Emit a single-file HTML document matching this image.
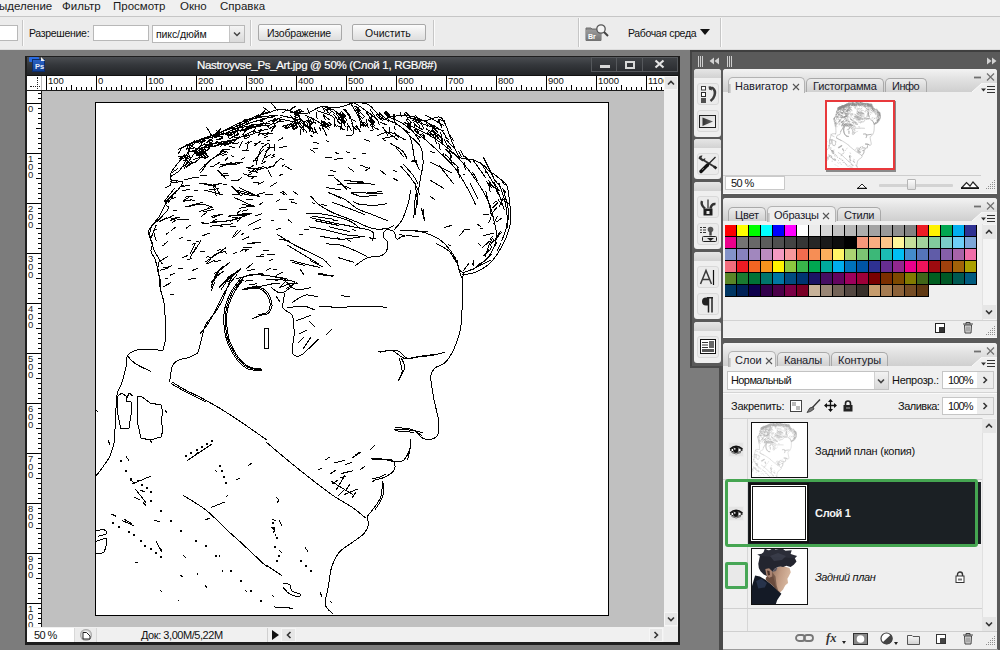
<!DOCTYPE html>
<html><head><meta charset="utf-8">
<style>
*{box-sizing:border-box;margin:0;padding:0}
html,body{width:1000px;height:650px;overflow:hidden;background:#7c7c7c;font-family:"Liberation Sans",sans-serif;font-size:11px;color:#111}
div{position:absolute}
.t{position:absolute;white-space:nowrap;line-height:1}
.sep{width:2px;border-left:1px solid #c6c6c6;border-right:1px solid #fbfbfb}
.inp{background:#fff;border:1px solid #b8b8b8}
.btn{background:linear-gradient(#fcfcfc,#eeeeee 45%,#dedede);border:1px solid #a8a8a8;border-radius:2px}
.grp{width:27px;background:#efefef;border-radius:3px;overflow:hidden}
.grph{left:0;top:0;width:27px;height:9px;background:linear-gradient(#e6e6e6,#d2d2d2)}
.ib{left:3px;width:21px;height:21px;border:1px solid #d9d9d9;border-radius:3px;background:#ebebeb}
.pnl{left:723px;width:274px;background:#efefef;overflow:hidden}
.ph{left:0;top:0;width:274px;height:23px;background:linear-gradient(#f4f4f4,#e2e2e2 50%,#cfcfcf)}
.tab{top:8px;height:15px;border:1px solid #a5a5a5;border-bottom:none;border-radius:5px 5px 0 0;background:linear-gradient(#eeeeee,#cfcfcf);color:#222}
.tab.on{background:#efefef;height:16px}
.tab span{position:absolute;left:7px;top:2px;white-space:nowrap;font-size:11px}
</style></head><body>

<!-- MENU BAR -->
<div style="left:0;top:0;width:1000px;height:17px;background:#f0f0f0"></div>
<div style="left:0;top:16px;width:1000px;height:1px;background:#c6c6c6"></div>
<span class="t" style="left:-1px;top:1px;font-size:11.5px;color:#1a1a1a">ыделение</span>
<span class="t" style="left:62px;top:1px;font-size:11.5px;color:#1a1a1a">Фильтр</span>
<span class="t" style="left:113px;top:1px;font-size:11.5px;color:#1a1a1a">Просмотр</span>
<span class="t" style="left:180px;top:1px;font-size:11.5px;color:#1a1a1a">Окно</span>
<span class="t" style="left:220px;top:1px;font-size:11.5px;color:#1a1a1a">Справка</span>
<div style="left:0;top:17px;width:1000px;height:33px;background:#ececec"></div>
<div style="left:0;top:49px;width:1000px;height:1px;background:#dcdcdc"></div>
<div class="inp" style="left:-2px;top:25px;width:20px;height:16px"></div>
<div class="sep" style="left:22px;top:20px;height:26px"></div>
<span class="t" style="left:29px;top:28px;font-size:10.5px;letter-spacing:-0.3px;color:#111">Разрешение:</span>
<div class="inp" style="left:93px;top:25px;width:56px;height:16px"></div>
<div class="inp" style="left:152px;top:25px;width:93px;height:18px"></div>
<span class="t" style="left:156px;top:29px;font-size:10.5px;letter-spacing:-0.1px;color:#111">пикс/дюйм</span>
<div style="left:229px;top:26px;width:15px;height:16px;background:linear-gradient(#f4f4f4,#dadada);border-left:1px solid #c4c4c4"></div>
<svg style="position:absolute;left:233px;top:31px" width="8" height="6"><path d="M1 1.5L4 4.5L7 1.5" stroke="#444" stroke-width="1.5" fill="none"/></svg>
<div class="sep" style="left:250px;top:20px;height:26px"></div>
<div class="btn" style="left:258px;top:24px;width:84px;height:17px"></div>
<span class="t" style="left:267px;top:28px;font-size:10.5px;letter-spacing:-0.2px;color:#111">Изображение</span>
<div class="btn" style="left:352px;top:24px;width:74px;height:17px"></div>
<span class="t" style="left:365px;top:28px;font-size:10.5px;color:#111">Очистить</span>
<div class="sep" style="left:433px;top:20px;height:26px"></div>
<div class="sep" style="left:578px;top:18px;height:29px"></div>
<div class="sep" style="left:720px;top:18px;height:29px"></div>
<svg style="position:absolute;left:584px;top:23px" width="26" height="19"><path d="M2 5H7L8 6H17V17.5H2Z" fill="#8a8a8a" stroke="#6f6f6f"/><rect x="2" y="7" width="15" height="10.5" fill="url(#gBr)"/><defs><linearGradient id="gBr" x1="0" y1="0" x2="0" y2="1"><stop offset="0" stop-color="#9a9a9a"/><stop offset="1" stop-color="#767676"/></linearGradient></defs><text x="4" y="16" font-family="Liberation Sans" font-size="7" font-weight="bold" fill="#fff">Br</text><circle cx="17" cy="6" r="4.2" fill="#f4f4f4" stroke="#555" stroke-width="1.3"/><path d="M20 9L24 13" stroke="#444" stroke-width="2"/></svg>
<span class="t" style="left:628px;top:28px;font-size:10.5px;letter-spacing:-0.35px;color:#111">Рабочая среда</span>
<svg style="position:absolute;left:700px;top:29px" width="10" height="6"><path d="M0 0H10L5 6Z" fill="#111"/></svg>
<!-- DOC WINDOW -->
<div style="left:25px;top:56px;width:655px;height:589px;background:#1e1e1e"></div>
<div style="left:27px;top:57px;width:651px;height:18px;background:linear-gradient(#4a4d51,#34373b 45%,#222427)"></div>
<div style="left:29px;top:57px;width:10px;height:5px;background:#2a6be0;border-radius:1px"></div>
<div style="left:32px;top:59px;width:13px;height:13px;background:linear-gradient(#2a62c4,#123f93);border:1px solid #0b2d6a"></div>
<div style="left:41px;top:57px;width:0;height:0;border-left:4px solid #f0f0f0;border-top:4px solid transparent"></div>
<span class="t" style="left:35px;top:63px;font-size:7.5px;font-weight:bold;color:#e8eef8">Ps</span>
<span class="t" style="left:197px;top:60px;font-size:11.5px;color:#fff;letter-spacing:-0.32px;-webkit-text-stroke:0.2px #fff">Nastroyvse_Ps_Art.jpg @ 50% (Слой 1, RGB/8#)</span>
<div style="left:591px;top:57px;width:87px;height:15px;border:1px solid #55585c;background:linear-gradient(#3e4145,#2b2d31)"></div>
<div style="left:616px;top:58px;width:1px;height:13px;background:#55585c"></div>
<div style="left:642px;top:58px;width:1px;height:13px;background:#55585c"></div>
<div style="left:600px;top:65px;width:10px;height:3px;background:#d8d8d8"></div>
<div style="left:625px;top:61px;width:10px;height:8px;border:2px solid #d8d8d8"></div>
<svg style="position:absolute;left:654px;top:59px" width="11" height="10"><path d="M1.5 1.5L9.5 8.5M9.5 1.5L1.5 8.5" stroke="#e4e4e4" stroke-width="2.2"/></svg>
<div style="left:27px;top:75px;width:651px;height:1px;background:#111"></div>
<div style="left:27px;top:76px;width:637px;height:14px;background:#fff"></div>
<div style="left:27px;top:90px;width:637px;height:1px;background:#1a1a1a"></div>
<div style="left:27px;top:91px;width:14px;height:536px;background:#fff"></div>
<div style="left:41px;top:76px;width:1px;height:551px;background:#1a1a1a"></div>
<div style="left:30px;top:86px;width:10px;height:0;border-top:1px dotted #222"></div>
<div style="left:37px;top:77px;width:0;height:12px;border-left:1px dotted #222"></div>
<div style="left:41px;top:76px;width:1px;height:14px;background:#bbb"></div>
<div style="left:42px;top:76px;width:4px;height:14px;background:#fff"></div>
<div style="left:46px;top:87px;width:618px;height:3px;background:linear-gradient(to right,#000 0 1px,transparent 1px) 0 0/5px 3px repeat-x"></div>
<div style="left:46px;top:85px;width:618px;height:5px;background:linear-gradient(to right,#000 0 1px,transparent 1px) 25px 0/50px 5px repeat-x"></div>
<div style="left:46px;top:76px;width:618px;height:14px;background:linear-gradient(to right,#000 0 1px,transparent 1px) 0 0/50px 14px repeat-x"></div>
<span class="t" style="left:48px;top:75.5px;font-size:9.5px;color:#111">100</span>
<span class="t" style="left:98px;top:75.5px;font-size:9.5px;color:#111">0</span>
<span class="t" style="left:148px;top:75.5px;font-size:9.5px;color:#111">100</span>
<span class="t" style="left:198px;top:75.5px;font-size:9.5px;color:#111">200</span>
<span class="t" style="left:248px;top:75.5px;font-size:9.5px;color:#111">300</span>
<span class="t" style="left:298px;top:75.5px;font-size:9.5px;color:#111">400</span>
<span class="t" style="left:348px;top:75.5px;font-size:9.5px;color:#111">500</span>
<span class="t" style="left:398px;top:75.5px;font-size:9.5px;color:#111">600</span>
<span class="t" style="left:448px;top:75.5px;font-size:9.5px;color:#111">700</span>
<span class="t" style="left:498px;top:75.5px;font-size:9.5px;color:#111">800</span>
<span class="t" style="left:548px;top:75.5px;font-size:9.5px;color:#111">900</span>
<span class="t" style="left:598px;top:75.5px;font-size:9.5px;color:#111">1000</span>
<span class="t" style="left:648px;top:75.5px;font-size:9.5px;color:#111">1100</span>
<div style="left:38px;top:91px;width:3px;height:536px;background:linear-gradient(to bottom,#000 0 1px,transparent 1px) 0 2px/3px 5px repeat-y"></div>
<div style="left:36px;top:91px;width:5px;height:536px;background:linear-gradient(to bottom,#000 0 1px,transparent 1px) 0 37px/5px 50px repeat-y"></div>
<div style="left:27px;top:91px;width:14px;height:536px;background:linear-gradient(to bottom,#000 0 1px,transparent 1px) 0 12px/14px 50px repeat-y"></div>
<span class="t" style="left:28px;top:105px;font-size:9.5px;line-height:8px;color:#1c1c1c">0</span>
<span class="t" style="left:28px;top:155px;font-size:9.5px;line-height:8px;color:#1c1c1c">1<br>0<br>0</span>
<span class="t" style="left:28px;top:205px;font-size:9.5px;line-height:8px;color:#1c1c1c">2<br>0<br>0</span>
<span class="t" style="left:28px;top:255px;font-size:9.5px;line-height:8px;color:#1c1c1c">3<br>0<br>0</span>
<span class="t" style="left:28px;top:305px;font-size:9.5px;line-height:8px;color:#1c1c1c">4<br>0<br>0</span>
<span class="t" style="left:28px;top:355px;font-size:9.5px;line-height:8px;color:#1c1c1c">5<br>0<br>0</span>
<span class="t" style="left:28px;top:405px;font-size:9.5px;line-height:8px;color:#1c1c1c">6<br>0<br>0</span>
<span class="t" style="left:28px;top:455px;font-size:9.5px;line-height:8px;color:#1c1c1c">7<br>0<br>0</span>
<span class="t" style="left:28px;top:505px;font-size:9.5px;line-height:8px;color:#1c1c1c">8<br>0<br>0</span>
<span class="t" style="left:28px;top:555px;font-size:9.5px;line-height:8px;color:#1c1c1c">9<br>0<br>0</span>
<span class="t" style="left:28px;top:605px;font-size:9.5px;line-height:8px;color:#1c1c1c">1<br>0<br>0<br>0</span>
<div style="left:42px;top:91px;width:622px;height:536px;background:#c0c0c0;overflow:hidden"></div>
<div style="left:95px;top:102px;width:514px;height:514px;background:#fff;border:1px solid #000"></div>
<div style="left:664px;top:76px;width:14px;height:551px;background:#f0f0f0"></div>
<div style="left:664px;top:76px;width:14px;height:14px;background:#e6e6e6;border:1px solid #f6f6f6"></div>
<svg style="position:absolute;left:667px;top:80px" width="8" height="6"><path d="M1 4.5L4 1.5L7 4.5" stroke="#333" stroke-width="1.6" fill="none"/></svg>
<div style="left:664px;top:612px;width:14px;height:14px;background:#e6e6e6;border:1px solid #f6f6f6"></div>
<svg style="position:absolute;left:667px;top:616px" width="8" height="6"><path d="M1 1.5L4 4.5L7 1.5" stroke="#333" stroke-width="1.6" fill="none"/></svg>
<div style="left:27px;top:627px;width:651px;height:15px;background:#f0f0f0"></div>
<div style="left:27px;top:628px;width:47px;height:14px;background:#fff"></div>
<span class="t" style="left:34px;top:630px;font-size:11px;letter-spacing:-0.6px;color:#111">50 %</span>
<div style="left:74px;top:628px;width:23px;height:14px;background:#ececec;border-left:1px solid #d8d8d8;border-right:1px solid #d8d8d8"></div>
<div style="left:80px;top:629px;width:12px;height:12px;border-radius:50%;background:radial-gradient(#f4f4f4 40%,#8d8d8d 75%,#cfcfcf)"></div>
<svg style="position:absolute;left:82px;top:631px" width="9" height="9"><path d="M1 1.5H4.5L8 5V8H1Z" fill="#fff" stroke="#222" stroke-width="1"/></svg>
<span class="t" style="left:141px;top:630px;font-size:11px;letter-spacing:-0.45px;color:#111">Док: 3,00M/5,22M</span>
<div style="left:267px;top:628px;width:1px;height:14px;background:#d0d0d0"></div>
<div style="left:272px;top:630px;width:0;height:0;border-left:7px solid #111;border-top:5px solid transparent;border-bottom:5px solid transparent"></div>
<div style="left:281px;top:628px;width:15px;height:14px;background:#e6e6e6;border:1px solid #f6f6f6"></div>
<svg style="position:absolute;left:286px;top:631px" width="6" height="8"><path d="M4.5 1L1.5 4L4.5 7" stroke="#333" stroke-width="1.6" fill="none"/></svg>
<div style="left:649px;top:628px;width:14px;height:14px;background:#e6e6e6;border:1px solid #f6f6f6"></div>
<svg style="position:absolute;left:653px;top:631px" width="6" height="8"><path d="M1.5 1L4.5 4L1.5 7" stroke="#333" stroke-width="1.6" fill="none"/></svg>
<div style="left:664px;top:627px;width:14px;height:15px;background:#ececec"></div>
<div style="left:671px;top:634px;width:6px;height:7px;background:radial-gradient(circle,#fff 0.6px,transparent 0.7px);background-size:2px 2px"></div>
<svg style="position:absolute;left:0;top:0" width="1000" height="650" viewBox="0 0 1000 650">
<defs><clipPath id="cv"><rect x="96" y="103" width="512" height="512"/></clipPath>
<g id="art" stroke-linejoin="round" stroke-linecap="round">
<path d="M178.5 149.1 C181.3 147.8 189.6 143.7 195.5 141.3 C201.4 138.9 207.7 136.9 213.8 134.7 C219.9 132.5 226.5 130.4 232.1 128.2 C237.8 126.0 242.2 124.3 247.8 121.6 C253.5 119.0 263.1 114.0 266.2 112.5"/>
<path d="M185.0 145.2 C188.5 144.1 199.0 140.6 205.9 138.6 C212.9 136.7 219.0 135.4 226.9 133.4 C234.7 131.5 246.5 128.6 253.1 126.9 C259.6 125.1 264.0 123.6 266.2 122.9"/>
<path d="M190.2 151.7 C194.2 150.4 205.9 146.1 213.8 143.9 C221.7 141.7 230.8 140.8 237.4 138.6 C243.9 136.5 250.5 132.1 253.1 130.8"/>
<path d="M185.0 154.4 C183.3 156.5 176.9 164.2 174.5 167.4 C172.1 170.7 171.0 171.8 170.6 174.0 C170.2 176.2 170.0 179.2 171.9 180.5 C173.9 181.8 181.5 180.1 182.4 181.8 C183.3 183.6 179.3 188.2 177.2 191.0 C175.0 193.8 171.5 196.2 169.3 198.9 C167.1 201.5 165.8 203.7 164.1 206.7 C162.3 209.8 160.8 214.1 158.8 217.2 C156.9 220.2 154.0 222.4 152.3 225.0 C150.5 227.7 148.4 229.8 148.4 232.9 C148.4 235.9 151.8 240.3 152.3 243.4 C152.7 246.4 150.5 248.6 151.0 251.2 C151.4 253.8 153.6 255.6 154.9 259.1 C156.2 262.6 158.2 270.0 158.8 272.2"/>
<path d="M200.7 172.7 C202.5 170.5 206.8 163.1 211.2 159.6 C215.5 156.1 224.3 153.0 226.9 151.7"/>
<path d="M221.7 164.8 L241.3 162.2"/>
<path d="M199.4 183.2 C201.8 183.6 210.3 183.8 213.8 185.8 C217.3 187.7 219.3 193.4 220.3 194.9"/>
<path d="M208.6 185.8 L221.7 183.2"/>
<path d="M217.7 170.1 L224.3 176.6"/>
<path d="M232.1 187.1 C233.9 188.2 238.2 192.1 242.6 193.6 C247.0 195.2 255.7 195.8 258.3 196.2"/>
<path d="M187.6 206.7 C189.8 206.3 196.8 204.1 200.7 204.1 C204.6 204.1 209.4 206.3 211.2 206.7"/>
<path d="M203.3 211.9 L213.8 209.3"/>
<path d="M211.2 222.4 C213.8 222.2 222.5 221.8 226.9 221.1 C231.3 220.5 235.6 218.9 237.4 218.5"/>
<path d="M229.5 215.9 L250.5 213.3"/>
<path d="M237.4 230.3 L232.1 238.1"/>
<path d="M247.8 243.4 L260.9 242.1"/>
<path d="M195.5 243.4 L190.2 253.8"/>
<path d="M205.9 261.7 C208.6 259.9 218.2 252.5 221.7 251.2 C225.1 249.9 226.0 253.4 226.9 253.8"/>
<path d="M253.1 162.2 L263.5 149.1"/>
<path d="M255.7 170.1 L266.2 167.4"/>
<path d="M242.6 204.1 L253.1 206.7"/>
<path d="M169.3 217.2 L174.5 219.8"/>
<path d="M177.2 219.8 L187.6 219.8"/>
<path d="M219.0 167.4 L232.1 162.2"/>
<path d="M174.5 188.4 L164.1 201.5"/>
<path d="M156.2 225.0 L151.0 238.1"/>
<path d="M178.5 149.2 C180.9 148.2 188.1 145.1 193.1 143.1 C198.1 141.0 203.3 139.0 208.5 136.9 C213.6 134.9 218.7 133.1 223.8 130.8 C229.0 128.5 234.1 125.4 239.2 123.1 C244.4 120.8 249.5 118.7 254.6 116.9 C259.7 115.1 265.6 113.6 270.0 112.3 C274.4 111.0 275.8 109.0 280.8 109.2 C285.8 109.5 296.8 113.1 300.0 113.8"/>
<path d="M185.4 146.2 C187.9 145.1 195.1 141.8 200.8 140.0 C206.4 138.2 213.6 137.2 219.2 135.4 C224.9 133.6 229.5 131.3 234.6 129.2 C239.7 127.2 244.9 124.9 250.0 123.1 C255.1 121.3 260.8 119.7 265.4 118.5 C270.0 117.2 275.6 115.9 277.7 115.4"/>
<path d="M190.0 149.2 C189.2 151.3 187.2 157.9 185.4 161.5 C183.6 165.1 181.8 168.2 179.2 170.8 C176.7 173.3 171.5 175.9 170.0 176.9"/>
<path d="M196.2 150.8 C194.9 152.6 190.5 159.0 188.5 161.5 C186.4 164.1 184.6 165.4 183.8 166.2"/>
<path d="M206.9 127.7 L211.5 135.4"/>
<path d="M263.8 107.7 L270.0 112.3"/>
<path d="M271.5 103.1 L277.7 110.8"/>
<path d="M199.2 170.8 C200.8 169.2 204.4 164.9 208.5 161.5 C212.6 158.2 221.3 152.6 223.8 150.8"/>
<path d="M220.8 164.6 L242.3 162.3"/>
<path d="M222.3 165.4 L239.2 163.8"/>
<path d="M246.9 167.7 L260.8 169.2"/>
<path d="M248.5 170.8 L257.7 172.3"/>
<path d="M256.2 164.6 C256.9 162.1 258.7 152.8 260.8 149.2 C262.8 145.6 267.2 144.1 268.5 143.1"/>
<path d="M262.3 161.5 L270.0 144.6"/>
<path d="M199.2 183.1 C201.5 183.5 209.5 185.4 213.1 185.4 C216.7 185.4 219.5 183.5 220.8 183.1"/>
<path d="M213.1 184.6 L216.2 195.4"/>
<path d="M231.5 186.2 L239.2 193.8"/>
<path d="M239.2 187.7 L259.2 196.9"/>
<path d="M217.7 170.8 L225.4 178.5"/>
<path d="M243.8 173.8 L251.5 176.9"/>
<path d="M242.3 141.5 L239.2 147.7"/>
<path d="M248.5 141.5 L246.9 149.2"/>
<path d="M268.5 170.8 L271.5 176.9"/>
<path d="M280.8 158.5 L283.8 160.0"/>
<path d="M282.3 166.2 L284.6 164.6"/>
<path d="M274.6 144.6 L274.6 150.8"/>
<path d="M170.0 183.1 L182.3 181.5"/>
<path d="M205.4 146.2 C207.2 145.6 211.3 144.1 216.2 143.1 C221.0 142.1 231.5 140.5 234.6 140.0"/>
<path d="M206.9 147.7 C209.2 147.2 216.4 145.5 220.8 144.6 C225.1 143.7 231.0 142.7 233.1 142.3"/>
<path d="M210.0 144.6 L223.8 141.5"/>
<path d="M240.8 127.7 C243.3 127.2 251.3 125.4 256.2 124.6 C261.0 123.8 267.7 123.3 270.0 123.1"/>
<path d="M242.3 130.8 C245.1 130.0 254.9 127.1 259.2 126.2 C263.6 125.3 266.9 125.5 268.5 125.4"/>
<path d="M246.9 120.0 C249.5 119.5 257.7 117.7 262.3 116.9 C266.9 116.2 272.6 115.6 274.6 115.4"/>
<path d="M253.1 130.8 L265.4 135.4"/>
<path d="M262.3 121.5 L270.0 129.2"/>
<path d="M277.7 118.5 L300.0 123.1"/>
<path d="M280.8 115.4 L300.0 120.0"/>
<path d="M188.5 144.6 L197.7 149.2"/>
<path d="M216.2 130.8 L228.5 135.4"/>
<path d="M231.5 126.2 L236.2 130.8"/>
<path d="M290.0 112.3 C292.6 112.6 300.3 114.7 305.4 113.8 C310.5 112.9 315.6 107.9 320.8 106.9 C325.9 105.9 331.5 108.1 336.2 107.7 C340.8 107.3 345.9 105.4 348.5 104.6 C351.0 103.8 348.5 103.2 351.5 103.1 C354.6 102.9 362.8 102.3 366.9 103.8 C371.0 105.4 373.6 109.6 376.2 112.3 C378.7 115.0 380.0 119.2 382.3 120.0 C384.6 120.8 386.2 117.7 390.0 116.9 C393.8 116.2 400.4 115.1 405.4 115.4 C410.4 115.6 417.6 117.9 420.0 118.5"/>
<path d="M290.0 115.4 C291.5 116.7 296.4 120.3 299.2 123.1 C302.1 125.9 305.6 130.8 306.9 132.3"/>
<path d="M296.2 113.8 L308.5 127.7"/>
<path d="M305.4 115.4 C307.4 116.4 313.8 119.2 317.7 121.5 C321.5 123.8 326.7 127.9 328.5 129.2"/>
<path d="M317.7 110.8 C320.3 111.8 330.3 114.4 333.1 116.9 C335.9 119.5 334.4 124.6 334.6 126.2"/>
<path d="M320.8 120.0 L330.0 127.7"/>
<path d="M333.1 109.2 C334.4 110.5 339.5 113.6 340.8 116.9 C342.1 120.3 340.8 127.2 340.8 129.2"/>
<path d="M343.8 109.2 C345.1 111.0 350.0 115.9 351.5 120.0 C353.1 124.1 353.8 131.3 353.1 133.8 C352.3 136.4 347.9 135.1 346.9 135.4"/>
<path d="M346.9 123.1 L351.5 130.8"/>
<path d="M351.5 104.6 C352.8 106.9 357.7 114.6 359.2 118.5 C360.8 122.3 360.5 126.2 360.8 127.7"/>
<path d="M354.6 103.1 C356.7 104.6 363.8 107.9 366.9 112.3 C370.0 116.7 372.6 126.2 373.1 129.2 C373.6 132.3 370.5 130.5 370.0 130.8"/>
<path d="M363.8 109.2 C365.9 110.8 373.6 115.9 376.2 118.5 C378.7 121.0 378.7 123.6 379.2 124.6"/>
<path d="M382.3 118.5 C384.9 119.5 393.1 121.5 397.7 124.6 C402.3 127.7 407.2 131.3 410.0 136.9 C412.8 142.6 413.1 153.1 414.6 158.5 C416.2 163.8 418.5 167.4 419.2 169.2"/>
<path d="M388.5 116.9 C390.8 117.9 397.9 120.3 402.3 123.1 C406.7 125.9 411.7 130.8 414.6 133.8 C417.6 136.9 419.1 140.3 420.0 141.5"/>
<path d="M406.9 116.9 L420.0 121.5"/>
<path d="M377.7 135.4 C379.7 134.9 385.4 131.5 390.0 132.3 C394.6 133.1 402.8 138.7 405.4 140.0"/>
<path d="M382.3 138.5 L397.7 135.4"/>
<path d="M385.4 130.8 L397.7 140.0"/>
<path d="M390.0 143.1 C392.1 144.4 399.5 148.2 402.3 150.8 C405.1 153.3 406.2 157.2 406.9 158.5"/>
<path d="M396.2 147.7 L403.8 156.9"/>
<path d="M400.8 166.2 C402.3 167.9 407.4 173.6 410.0 176.9 C412.6 180.3 414.5 183.1 416.2 186.2 C417.8 189.2 419.4 193.8 420.0 195.4"/>
<path d="M403.8 164.6 C405.4 166.4 410.8 172.3 413.1 175.4 C415.4 178.5 416.9 181.8 417.7 183.1"/>
<path d="M310.0 149.2 L314.6 152.3"/>
<path d="M334.6 159.2 L342.3 158.5"/>
<path d="M353.1 158.5 L355.4 158.2"/>
<path d="M362.3 153.8 L365.4 153.1"/>
<path d="M365.4 170.8 L370.0 167.7"/>
<path d="M343.8 180.0 L374.6 184.6"/>
<path d="M346.9 183.1 L366.9 183.8"/>
<path d="M326.9 187.7 L336.2 189.2"/>
<path d="M328.5 192.3 L340.8 198.5"/>
<path d="M340.8 183.1 L346.9 189.2"/>
<path d="M351.5 192.3 L382.3 193.8"/>
<path d="M359.2 196.9 L376.2 195.4"/>
<path d="M293.1 118.5 L303.8 130.8"/>
<path d="M310.0 116.9 L325.4 126.2"/>
<path d="M336.2 113.8 L345.4 126.2"/>
<path d="M356.2 109.2 L363.8 126.2"/>
<path d="M370.0 109.2 L379.2 123.1"/>
<path d="M313.1 132.3 L317.7 133.1"/>
<path d="M177.7 190.0 C175.6 192.1 166.9 199.2 165.4 202.3 C163.8 205.4 169.5 205.6 168.5 208.5 C167.4 211.3 162.1 216.2 159.2 219.2 C156.4 222.3 153.1 224.1 151.5 226.9 C150.0 229.7 149.5 232.1 150.0 236.2 C150.5 240.3 153.1 247.7 154.6 251.5 C156.2 255.4 158.7 256.2 159.2 259.2 C159.7 262.3 157.4 266.2 157.7 270.0 C157.9 273.8 160.4 279.0 160.8 282.3 C161.2 285.6 160.1 288.7 160.0 290.0"/>
<path d="M185.4 206.9 L202.3 202.3"/>
<path d="M190.0 199.2 L194.6 200.8"/>
<path d="M199.2 211.5 L213.1 206.9"/>
<path d="M211.5 216.2 L222.3 214.6"/>
<path d="M177.7 220.0 L188.5 219.2"/>
<path d="M170.0 220.8 L176.2 217.7"/>
<path d="M202.3 223.8 L208.5 223.1"/>
<path d="M210.0 222.3 C213.8 221.9 226.2 221.5 233.1 220.0 C240.0 218.5 248.5 214.2 251.5 213.1"/>
<path d="M210.0 226.2 L233.1 223.8"/>
<path d="M228.5 216.2 L250.0 214.6"/>
<path d="M234.6 236.2 L240.8 230.0"/>
<path d="M234.6 197.7 L254.6 206.9"/>
<path d="M239.2 208.5 L253.1 205.4"/>
<path d="M279.2 210.0 L286.9 209.2"/>
<path d="M248.5 225.4 L260.8 219.2"/>
<path d="M248.5 243.8 L260.8 242.3"/>
<path d="M277.7 234.6 L290.0 242.3"/>
<path d="M279.2 239.2 L288.5 240.8"/>
<path d="M263.8 250.8 L268.5 250.8"/>
<path d="M256.2 256.9 L263.8 256.9"/>
<path d="M193.1 253.1 L200.8 240.8"/>
<path d="M190.0 257.7 L196.2 246.9"/>
<path d="M206.9 263.8 C208.2 262.3 211.5 256.7 214.6 254.6 C217.7 252.6 223.6 252.1 225.4 251.5"/>
<path d="M216.2 273.1 L230.0 262.3"/>
<path d="M214.6 276.2 L222.3 266.9"/>
<path d="M226.9 279.2 L240.8 268.5"/>
<path d="M220.8 290.0 L230.0 276.2"/>
<path d="M236.2 288.5 C237.7 286.4 241.3 278.5 245.4 276.2 C249.5 273.8 254.1 274.1 260.8 274.6 C267.4 275.1 281.3 278.5 285.4 279.2"/>
<path d="M242.3 290.0 C244.9 289.5 252.6 287.9 257.7 286.9 C262.8 285.9 270.5 284.4 273.1 283.8"/>
<path d="M211.5 290.0 L214.6 282.3"/>
<path d="M203.8 190.0 L222.3 194.6"/>
<path d="M236.2 190.0 L259.2 196.2"/>
<path d="M168.5 202.3 L173.1 196.2"/>
<path d="M153.1 230.0 L156.2 240.8"/>
<path d="M156.2 254.6 L162.3 263.8"/>
<path d="M310.8 196.2 C312.3 197.7 316.2 202.6 320.0 205.4 C323.8 208.2 328.2 210.5 333.8 213.1 C339.5 215.6 347.4 218.2 353.8 220.8 C360.3 223.3 366.7 227.2 372.3 228.5 C377.9 229.7 384.1 229.0 387.7 228.5 C391.3 227.9 392.8 225.9 393.8 225.4"/>
<path d="M329.2 193.1 C331.8 194.1 340.0 196.7 344.6 199.2 C349.2 201.8 352.3 205.9 356.9 208.5 C361.5 211.0 367.2 212.6 372.3 214.6 C377.4 216.7 385.1 219.7 387.7 220.8"/>
<path d="M332.3 202.3 C335.1 203.3 343.8 206.4 349.2 208.5 C354.6 210.5 362.1 213.6 364.6 214.6"/>
<path d="M350.8 193.1 L360.0 196.2"/>
<path d="M366.2 193.1 L381.5 191.5"/>
<path d="M356.9 203.8 C359.5 204.1 367.4 205.4 372.3 205.4 C377.2 205.4 383.8 204.1 386.2 203.8"/>
<path d="M306.2 213.1 C309.5 213.3 319.0 213.3 326.2 214.6 C333.3 215.9 343.6 218.5 349.2 220.8 C354.9 223.1 358.2 227.2 360.0 228.5"/>
<path d="M310.8 217.7 C314.1 218.5 323.6 220.8 330.8 222.3 C337.9 223.8 346.9 225.4 353.8 226.9 C360.8 228.5 369.2 229.2 372.3 231.5 C375.4 233.8 372.3 239.2 372.3 240.8"/>
<path d="M309.2 226.9 C312.1 227.4 320.3 228.7 326.2 230.0 C332.1 231.3 339.0 233.6 344.6 234.6 C350.3 235.6 357.4 235.9 360.0 236.2"/>
<path d="M320.0 236.2 C323.6 236.7 334.1 239.2 341.5 239.2 C349.0 239.2 360.8 236.7 364.6 236.2"/>
<path d="M326.2 243.8 C328.7 244.1 336.4 244.1 341.5 245.4 C346.7 246.7 352.8 249.7 356.9 251.5 C361.0 253.3 364.6 255.4 366.2 256.2"/>
<path d="M280.0 236.2 C282.1 237.4 287.7 241.3 292.3 243.8 C296.9 246.4 302.6 249.0 307.7 251.5 C312.8 254.1 319.2 256.7 323.1 259.2 C326.9 261.8 329.5 265.6 330.8 266.9"/>
<path d="M287.7 245.4 C290.3 246.9 297.9 251.5 303.1 254.6 C308.2 257.7 315.9 262.3 318.5 263.8"/>
<path d="M292.3 262.3 L304.6 265.4"/>
<path d="M310.8 260.8 L323.1 266.9"/>
<path d="M338.5 257.7 L353.8 262.3"/>
<path d="M355.4 265.4 C357.4 264.1 363.6 259.2 367.7 257.7 C371.8 256.2 376.9 257.2 380.0 256.2 C383.1 255.1 384.9 253.8 386.2 251.5 C387.4 249.2 388.2 244.9 387.7 242.3 C387.2 239.7 383.3 238.2 383.1 236.2 C382.8 234.1 384.4 230.8 386.2 230.0 C387.9 229.2 392.1 230.0 393.8 231.5 C395.6 233.1 395.4 238.5 396.9 239.2 C398.5 240.0 399.5 236.7 403.1 236.2 C406.7 235.6 415.9 236.2 418.5 236.2"/>
<path d="M400.0 230.0 L427.7 231.5"/>
<path d="M410.8 190.0 C410.3 192.6 409.2 200.3 407.7 205.4 C406.2 210.5 403.8 216.7 401.5 220.8 C399.2 224.9 395.1 228.5 393.8 230.0"/>
<path d="M415.4 194.6 L413.8 217.7"/>
<path d="M421.5 208.5 L424.6 220.8"/>
<path d="M318.5 273.1 L332.3 276.2"/>
<path d="M286.2 288.5 L296.9 282.3"/>
<path d="M312.3 216.2 L333.8 219.2"/>
<path d="M315.4 220.8 L338.5 225.4"/>
<path d="M329.2 226.9 L349.2 231.5"/>
<path d="M410.0 117.9 C412.6 118.3 420.5 120.5 425.7 120.5 C430.9 120.5 437.1 114.4 441.4 117.9 C445.8 121.3 448.8 134.9 451.9 141.4 C454.9 148.0 456.2 154.1 459.7 157.1 C463.2 160.2 468.9 158.4 472.8 159.7 C476.8 161.0 480.7 163.2 483.3 165.0 C485.9 166.7 485.9 168.0 488.5 170.2 C491.2 172.4 496.0 175.4 499.0 178.1 C502.1 180.7 505.1 182.0 506.9 185.9 C508.6 189.8 508.8 196.0 509.5 201.6 C510.1 207.3 511.2 214.3 510.8 219.9 C510.3 225.6 508.8 230.4 506.9 235.7 C504.9 240.9 502.1 246.6 499.0 251.4 C496.0 256.2 492.5 261.0 488.5 264.5 C484.6 267.9 479.8 270.6 475.4 272.3 C471.1 274.0 464.5 274.5 462.4 274.9"/>
<path d="M410.0 125.7 C413.5 127.5 424.4 132.3 430.9 136.2 C437.5 140.1 444.0 144.9 449.3 149.3 C454.5 153.6 457.6 156.7 462.4 162.4 C467.2 168.0 473.7 176.8 478.1 183.3 C482.4 189.8 485.9 195.5 488.5 201.6 C491.2 207.7 492.5 213.8 493.8 219.9 C495.1 226.1 497.3 232.2 496.4 238.3 C495.5 244.4 492.5 251.4 488.5 256.6 C484.6 261.8 475.4 267.5 472.8 269.7"/>
<path d="M415.2 130.9 C418.7 134.0 429.6 143.2 436.2 149.3 C442.7 155.4 449.3 161.0 454.5 167.6 C459.7 174.1 464.1 182.4 467.6 188.5 C471.1 194.6 474.1 201.6 475.4 204.2"/>
<path d="M410.0 136.2 C411.7 137.9 418.3 142.3 420.5 146.6 C422.7 151.0 423.1 157.1 423.1 162.4 C423.1 167.6 421.3 172.8 420.5 178.1 C419.6 183.3 418.7 187.7 417.9 193.8 C417.0 199.9 415.7 211.2 415.2 214.7"/>
<path d="M430.9 162.4 L451.9 172.8"/>
<path d="M430.9 180.7 L444.0 188.5"/>
<path d="M438.8 165.0 L453.2 183.3"/>
<path d="M470.2 183.3 L478.1 199.0"/>
<path d="M485.9 191.2 C486.8 195.1 490.7 209.5 491.2 214.7 C491.6 219.9 489.0 221.3 488.5 222.6"/>
<path d="M480.7 162.4 C483.3 166.7 492.5 180.7 496.4 188.5 C500.3 196.4 502.9 206.0 504.2 209.5"/>
<path d="M410.0 230.4 C412.6 230.9 420.5 231.3 425.7 233.0 C430.9 234.8 436.6 237.0 441.4 240.9 C446.2 244.8 451.4 251.4 454.5 256.6 C457.6 261.8 458.4 268.6 459.7 272.3 C461.0 276.0 461.9 277.8 462.4 278.8"/>
<path d="M436.2 243.5 C438.4 244.8 446.0 248.3 449.3 251.4 C452.5 254.4 454.7 260.1 455.8 261.8"/>
<path d="M444.0 227.8 L451.9 225.2"/>
<path d="M459.7 235.7 L465.0 229.1"/>
<path d="M483.3 235.7 L493.8 233.0"/>
<path d="M423.1 209.5 L424.4 219.9"/>
<path d="M412.6 120.5 L444.0 130.9"/>
<path d="M417.9 117.9 L438.8 128.3"/>
<path d="M425.7 115.2 L444.0 125.7"/>
<path d="M499.0 183.3 C500.1 186.8 504.2 197.3 505.5 204.2 C506.9 211.2 507.5 219.1 506.9 225.2 C506.2 231.3 502.5 238.3 501.6 240.9"/>
<path d="M502.9 188.5 C503.8 192.0 507.4 202.9 508.2 209.5 C508.9 216.0 507.5 224.7 507.4 227.8"/>
<path d="M483.3 157.1 L493.8 178.1"/>
<path d="M472.8 159.7 L485.9 178.1"/>
<path d="M415.2 183.3 L417.9 204.2"/>
<path d="M158.8 272.0 C159.0 274.6 159.3 282.5 160.1 287.7 C161.0 292.9 163.2 297.3 164.1 303.4 C164.9 309.5 165.2 318.2 165.4 324.4 C165.6 330.5 165.8 335.7 165.4 340.1 C164.9 344.4 163.2 348.8 162.8 350.5"/>
<path d="M162.8 350.5 C160.4 350.3 152.9 349.2 148.4 349.2 C143.8 349.2 138.8 349.4 135.3 350.5 C131.8 351.6 128.9 353.2 127.4 355.8 C125.9 358.4 127.0 361.9 126.1 366.2 C125.2 370.6 123.7 377.1 122.2 381.9 C120.7 386.7 118.0 388.9 116.9 395.0 C115.9 401.1 116.1 410.7 115.6 418.6 C115.2 426.5 114.5 438.2 114.3 442.2"/>
<path d="M127.4 355.8 C128.7 357.1 131.3 361.0 135.3 363.6 C139.2 366.2 148.4 370.2 151.0 371.5"/>
<path d="M169.7 381.8 C170.1 379.3 170.8 370.3 172.0 366.9 C173.2 363.4 174.9 362.4 176.6 361.1 C178.3 359.8 180.1 359.6 182.0 359.0 C183.9 358.4 185.6 358.6 188.2 357.6 C190.8 356.6 195.4 355.1 197.4 353.0 C199.4 350.9 199.2 347.7 200.0 345.0 C200.8 342.3 201.0 340.5 202.0 337.0 C203.0 333.5 204.0 327.8 206.0 324.0 C208.0 320.2 211.3 317.8 214.0 314.0 C216.7 310.2 219.8 305.3 222.0 301.0 C224.2 296.7 225.3 292.0 227.0 288.0 C228.7 284.0 231.2 278.8 232.0 277.0"/>
<path d="M171.0 383.5 C173.3 384.8 179.2 388.4 185.0 391.5 C190.8 394.6 202.5 400.2 206.0 402.0"/>
<path d="M171.9 381.9 C174.1 383.3 179.3 386.7 185.0 389.8 C190.7 392.9 198.1 395.9 205.9 400.3 C213.8 404.6 222.1 409.4 232.1 416.0 C242.2 422.5 260.5 435.6 266.2 439.5"/>
<path d="M211.2 282.5 L219.0 272.0"/>
<path d="M219.0 287.7 L232.1 274.6"/>
<path d="M211.2 287.7 L213.8 279.9"/>
<path d="M266.0 279.9 C268.6 279.9 276.9 279.4 281.7 279.9 C286.5 280.3 294.8 280.3 294.8 282.5 C294.8 284.7 285.6 292.1 281.7 292.9 C277.8 293.8 273.0 288.6 271.2 287.7"/>
<path d="M318.4 274.6 L334.1 275.9"/>
<path d="M318.4 306.0 C321.8 306.2 331.4 307.3 339.3 307.3 C347.2 307.3 357.6 306.0 365.5 306.0 C373.3 306.0 382.9 307.1 386.4 307.3"/>
<path d="M341.9 295.6 L349.8 296.9"/>
<path d="M378.6 351.8 C381.6 351.6 392.1 349.4 396.9 350.5 C401.7 351.6 403.0 357.5 407.4 358.4 C411.7 359.3 418.3 356.4 423.1 355.8 C427.9 355.1 434.0 354.7 436.2 354.5"/>
<path d="M399.5 358.4 C399.9 360.6 402.1 368.0 402.1 371.5 C402.1 375.0 399.9 378.0 399.5 379.3"/>
<path d="M394.3 429.1 C397.3 429.3 407.8 429.7 412.6 430.4 C417.4 431.0 421.3 432.6 423.1 433.0"/>
<path d="M326.2 334.8 L331.4 329.6"/>
<path d="M463.1 272.3 C463.0 276.4 462.9 287.7 462.5 296.9 C462.1 306.2 462.1 319.0 460.6 327.7 C459.2 336.4 456.5 343.3 453.8 349.2 C451.2 355.1 447.7 360.0 444.6 363.1 C441.5 366.2 437.7 365.4 435.4 367.7 C433.1 370.0 431.0 371.8 430.8 376.9 C430.5 382.1 432.6 391.3 433.8 398.5 C435.1 405.6 437.7 414.4 438.5 420.0 C439.2 425.6 439.2 429.2 438.5 432.3 C437.7 435.4 436.4 437.4 433.8 438.5 C431.3 439.5 425.9 439.5 423.1 438.5 C420.3 437.4 417.9 433.3 416.9 432.3"/>
<path d="M395.4 427.7 C397.9 427.9 406.4 427.9 410.8 429.2 C415.1 430.5 419.7 434.4 421.5 435.4"/>
<path d="M395.4 430.8 L413.8 432.3"/>
<path d="M380.0 352.3 C382.1 352.1 388.2 349.7 392.3 350.8 C396.4 351.8 400.5 357.4 404.6 358.5 C408.7 359.5 412.3 357.4 416.9 356.9 C421.5 356.4 427.7 356.2 432.3 355.4 C436.9 354.6 442.6 352.8 444.6 352.3"/>
<path d="M401.5 358.5 C402.1 360.0 405.1 364.1 404.6 367.7 C404.1 371.3 399.5 377.9 398.5 380.0"/>
<path d="M456.9 260.0 C457.9 262.1 457.4 272.3 463.1 272.3 C468.7 272.3 486.2 262.1 490.8 260.0"/>
<path d="M410.8 444.6 L407.7 460.0"/>
<path d="M114.3 442.0 C113.5 444.6 112.1 452.0 109.1 457.7 C106.0 463.4 98.2 473.0 96.0 476.0"/>
<path d="M183.7 495.7 C187.4 498.1 198.3 504.0 205.9 510.1 C213.6 516.2 223.4 526.6 229.5 532.3 C235.6 538.0 236.5 538.4 242.6 544.1 C248.7 549.8 262.2 562.6 266.2 566.3"/>
<path d="M96.0 531.0 C97.3 530.8 102.1 529.3 103.9 529.7 C105.6 530.1 107.3 532.5 106.5 533.6 C105.6 534.7 99.9 535.8 98.6 536.2"/>
<path d="M96.0 541.5 C97.7 541.0 105.2 537.1 106.5 538.9 C107.8 540.6 105.6 549.5 103.9 551.9 C102.1 554.3 97.3 553.0 96.0 553.3"/>
<path d="M187.6 460.3 L211.2 444.6"/>
<path d="M132.6 483.9 L151.0 476.0"/>
<path d="M135.3 489.1 L145.7 502.2"/>
<path d="M122.2 520.5 L134.0 525.8"/>
<path d="M111.7 514.0 L115.6 516.6"/>
<path d="M156.2 541.5 L161.4 551.9"/>
<path d="M211.2 507.4 L224.3 502.2"/>
<path d="M126.1 456.4 L128.7 460.3"/>
<path d="M266.0 442.0 C271.2 446.4 286.5 459.5 297.4 468.2 C308.3 476.9 322.3 487.8 331.4 494.4 C340.6 500.9 346.7 503.5 352.4 507.4 C358.1 511.4 363.3 516.2 365.5 517.9"/>
<path d="M266.0 565.0 L281.7 575.5"/>
<path d="M283.0 583.4 C284.1 583.6 288.0 583.4 289.6 584.7 C291.1 586.0 290.4 589.7 292.2 591.2 C293.9 592.7 298.9 593.0 300.0 593.8 C301.1 594.7 300.5 596.5 298.7 596.5 C297.0 596.5 292.2 595.4 289.6 593.8 C286.9 592.3 284.1 588.4 283.0 587.3"/>
<path d="M273.9 606.9 L292.2 608.2"/>
<path d="M331.4 481.3 L352.4 494.4"/>
<path d="M336.7 489.1 L344.5 476.0"/>
<path d="M341.9 473.4 L352.4 470.8"/>
<path d="M334.1 462.9 L344.5 460.3"/>
<path d="M352.4 457.7 L360.2 452.5"/>
<path d="M344.5 494.4 L357.6 489.1"/>
<path d="M410.0 438.5 C410.0 440.0 411.0 444.1 410.0 447.7 C409.0 451.3 406.4 457.7 403.8 460.0 C401.2 462.3 398.7 461.8 394.6 461.5 C390.5 461.2 383.1 459.0 379.2 458.5 C375.3 458.0 372.8 458.5 371.5 458.5"/>
<path d="M371.5 460.0 C374.8 460.0 387.6 458.5 391.5 460.0 C395.4 461.5 395.6 466.4 394.6 469.2 C393.6 472.0 388.7 475.1 385.4 476.9 C382.1 478.7 376.7 479.2 374.6 480.0 C372.5 480.8 373.3 481.2 373.0 481.5"/>
<path d="M372.0 479.0 C373.3 478.7 377.7 477.8 380.0 477.0 C382.3 476.2 385.0 474.5 386.0 474.0"/>
<path d="M382.3 481.5 C382.1 484.1 382.4 492.3 380.8 496.9 C379.2 501.5 375.3 505.9 373.0 509.2 C370.7 512.5 367.9 515.6 366.9 516.9"/>
<path d="M384.0 483.0 C383.8 485.3 384.0 492.5 382.5 497.0 C381.0 501.5 376.2 507.8 375.0 510.0"/>
<path d="M367.0 517.0 C367.2 518.3 369.0 521.8 368.5 524.6 C368.0 527.4 366.6 530.7 363.8 533.8 C361.0 536.9 355.6 539.9 351.5 543.0 C347.4 546.1 342.5 548.2 339.2 552.3 C335.9 556.4 333.3 562.1 331.5 567.7 C329.7 573.3 329.5 579.9 328.5 586.0 C327.5 592.1 324.6 600.0 325.4 604.6 C326.1 609.2 331.7 612.3 333.0 613.8"/>
<path d="M330.0 474.0 L336.0 470.0"/>
<path d="M340.0 478.0 L346.0 476.0"/>
<path d="M332.0 484.0 L338.0 480.0"/>
<path d="M346.0 490.0 L350.0 484.0"/>
<path d="M338.0 496.0 L344.0 490.0"/>
<path d="M352.0 498.0 L356.0 492.0"/>
<path d="M318.0 470.0 L322.0 468.0"/>
<path d="M325.0 460.0 L330.0 457.0"/>
<path d="M345.0 465.0 L352.0 462.0"/>
<path d="M355.0 455.0 L360.0 452.0"/>
<path d="M370.0 450.0 L375.0 445.0"/>
<path d="M360.0 470.0 L365.0 466.0"/>
<path d="M118.0 396.0 L122.0 393.0 L127.0 397.0 L126.0 401.0 L131.0 402.0 L131.0 415.0 L129.0 428.0 L121.0 429.0 L119.0 420.0 L117.0 410.0 L118.0 396.0"/>
<path d="M137.0 397.0 L141.0 396.0 L150.0 403.0 L161.0 405.0 L163.0 412.0 L161.0 420.0 L163.0 430.0 L161.0 437.0 L150.0 440.0 L141.0 438.0 L138.0 425.0 L137.0 410.0 L137.0 397.0"/>
<path d="M127.0 398.0 L129.0 393.0 L133.0 396.0"/>
<path d="M185 455h1.5v1.5h-1.5z"/>
<path d="M190 452h1.5v1.5h-1.5z"/>
<path d="M196 449h1.5v1.5h-1.5z"/>
<path d="M201 446h1.5v1.5h-1.5z"/>
<path d="M206 443h1.5v1.5h-1.5z"/>
<path d="M211 440h1.5v1.5h-1.5z"/>
<path d="M137 480h1.5v1.5h-1.5z"/>
<path d="M141 484h1.5v1.5h-1.5z"/>
<path d="M146 487h1.5v1.5h-1.5z"/>
<path d="M150 491h1.5v1.5h-1.5z"/>
<path d="M219 465h1.5v1.5h-1.5z"/>
<path d="M221 470h1.5v1.5h-1.5z"/>
<path d="M223 476h1.5v1.5h-1.5z"/>
<path d="M225 482h1.5v1.5h-1.5z"/>
<path d="M140 540h1.5v1.5h-1.5z"/>
<path d="M144 545h1.5v1.5h-1.5z"/>
<path d="M150 548h1.5v1.5h-1.5z"/>
<path d="M155 552h1.5v1.5h-1.5z"/>
<path d="M160 556h1.5v1.5h-1.5z"/>
<path d="M272 522h1.5v1.5h-1.5z"/>
<path d="M273 527h1.5v1.5h-1.5z"/>
<path d="M276 537h1.5v1.5h-1.5z"/>
<path d="M274 546h1.5v1.5h-1.5z"/>
<path d="M278 555h1.5v1.5h-1.5z"/>
<path d="M276 560h1.5v1.5h-1.5z"/>
<path d="M300 560h1.5v1.5h-1.5z"/>
<path d="M305 565h1.5v1.5h-1.5z"/>
<path d="M310 570h1.5v1.5h-1.5z"/>
<path d="M128 531h1.5v1.5h-1.5z"/>
<path d="M133 534h1.5v1.5h-1.5z"/>
<path d="M112 522h1.5v1.5h-1.5z"/>
<path d="M118 526h1.5v1.5h-1.5z"/>
<path d="M150 500h1.5v1.5h-1.5z"/>
<path d="M160 510h1.5v1.5h-1.5z"/>
<path d="M170 520h1.5v1.5h-1.5z"/>
<path d="M180 530h1.5v1.5h-1.5z"/>
<path d="M195 540h1.5v1.5h-1.5z"/>
<path d="M205 545h1.5v1.5h-1.5z"/>
<path d="M215 555h1.5v1.5h-1.5z"/>
<path d="M230 570h1.5v1.5h-1.5z"/>
<path d="M240 580h1.5v1.5h-1.5z"/>
<path d="M250 590h1.5v1.5h-1.5z"/>
<path d="M260 600h1.5v1.5h-1.5z"/>
<path d="M120 460h1.5v1.5h-1.5z"/>
<path d="M125 470h1.5v1.5h-1.5z"/>
<path d="M130 478h1.5v1.5h-1.5z"/>
<path d="M276.0 497.0 L279.0 500.0 L277.0 503.0"/>
<path d="M272.0 519.0 L276.0 521.0"/>
<path d="M271.0 527.0 L275.0 530.0 L273.0 533.0"/>
<path d="M240.6 278.5 C239.1 280.6 234.0 286.4 231.4 291.4 C228.8 296.3 226.1 302.4 224.9 308.0 C223.7 313.5 223.5 318.7 224.0 324.6 C224.4 330.4 225.5 337.2 227.7 343.0 C229.8 348.9 233.5 355.3 236.9 359.6 C240.3 363.9 243.8 367.0 248.0 368.9 C252.1 370.7 259.5 370.4 261.8 370.7"/>
<path d="M241.7 279.2 C240.2 281.3 235.4 286.9 232.8 291.7 C230.3 296.6 227.6 302.9 226.4 308.3 C225.2 313.8 225.0 318.9 225.5 324.6 C225.9 330.3 226.9 337.0 229.0 342.7 C231.1 348.3 234.7 354.5 238.0 358.7 C241.3 362.9 244.7 365.9 248.7 367.7 C252.7 369.6 259.6 369.3 261.8 369.6"/>
<path d="M242.8 279.9 C241.4 282.0 236.8 287.7 234.3 292.5 C231.8 297.3 228.9 303.4 227.7 308.7 C226.4 314.1 226.4 319.0 226.8 324.6 C227.2 330.1 228.1 336.6 230.1 342.1 C232.1 347.6 235.5 353.6 238.7 357.8 C242.0 361.9 245.8 365.2 249.4 367.0 C253.1 368.9 259.0 368.5 260.9 368.9"/>
<path d="M236.9 278.5 C240.0 277.8 249.2 275.1 255.4 274.8 C261.5 274.5 268.9 276.0 273.8 276.6 C278.7 277.2 282.7 277.8 284.9 278.5 C287.0 279.1 287.6 278.8 286.7 280.3 C285.8 281.8 279.0 287.1 279.3 287.7 C279.6 288.3 285.5 284.8 288.6 284.0 C291.6 283.2 296.2 283.2 297.8 283.1"/>
<path d="M244.3 288.6 C246.1 288.3 252.0 286.6 255.4 286.8 C258.7 286.9 262.1 287.8 264.6 289.5 C267.0 291.2 268.9 294.1 270.1 296.9 C271.3 299.7 272.3 303.4 272.0 306.1 C271.6 308.9 270.1 312.0 268.3 313.5 C266.4 315.0 263.7 314.4 260.9 315.4 C258.1 316.3 253.2 318.4 251.7 319.0"/>
<path d="M246.1 289.5 C247.7 289.3 252.4 287.8 255.4 288.0 C258.3 288.3 261.4 289.4 263.7 291.0 C265.9 292.6 267.6 295.3 268.6 297.8 C269.7 300.3 270.4 303.7 270.1 306.1 C269.8 308.6 268.6 311.2 266.8 312.6 C264.9 314.0 260.3 314.1 259.0 314.4"/>
<path d="M264.6 328.3 L268.3 328.3 L268.3 348.6 L264.6 348.6 L264.6 328.3"/>
<path d="M200.0 333.8 C201.2 332.3 204.9 328.3 207.4 324.6 C209.8 320.9 212.3 316.3 214.8 311.7 C217.2 307.0 219.7 301.5 222.1 296.9 C224.6 292.3 227.1 287.7 229.5 284.0 C232.0 280.3 235.7 276.3 236.9 274.8"/>
<path d="M211.1 285.8 C212.0 284.3 214.5 279.1 216.6 276.6 C218.8 274.1 222.8 272.0 224.0 271.1"/>
<path d="M218.5 271.1 L227.7 263.7"/>
<path d="M227.7 280.3 L240.6 269.2"/>
<path d="M207.4 263.7 L214.8 260.0"/>
<path d="M284.9 293.2 C284.6 295.7 281.8 304.3 283.0 308.0 C284.3 311.7 290.4 311.0 292.3 315.4 C294.1 319.7 294.1 327.7 294.1 333.8 C294.1 340.0 291.3 348.6 292.3 352.3 C293.2 355.9 296.6 356.9 299.6 355.9 C302.7 355.0 307.6 349.5 310.7 346.7 C313.8 343.9 316.9 340.6 318.1 339.3"/>
<path d="M286.7 308.0 C289.5 307.7 298.7 305.8 303.3 306.1 C307.9 306.4 312.5 309.2 314.4 309.8"/>
<path d="M292.3 302.4 C294.4 301.2 300.9 296.0 305.2 295.1 C309.5 294.1 315.9 296.6 318.1 296.9"/>
<path d="M295.9 320.9 L310.7 315.4"/>
<path d="M299.6 333.8 L307.0 330.1"/>
<path d="M297.8 343.0 L303.3 337.5"/>
<path d="M303.3 348.6 L310.7 337.5"/>
<path d="M308.9 320.9 L314.4 326.4"/>
<path d="M286.7 282.1 C288.3 283.4 291.9 288.6 295.9 289.5 C299.9 290.4 308.2 288.0 310.7 287.7"/>
<path d="M290.4 260.0 C292.6 260.6 298.4 262.5 303.3 263.7 C308.2 264.9 317.2 266.8 319.9 267.4"/>
<path d="M294.2 122.0 L300.0 118.8 L301.1 120.7 L295.2 123.9Z"/>
<path d="M311.5 118.4 L314.2 121.1 L312.5 122.7 L309.9 120.0Z"/>
<path d="M343.3 119.6 L345.6 122.0 L344.2 123.4 L341.9 121.0Z"/>
<path d="M200.7 155.5 L205.7 152.8 L206.5 154.1 L201.4 156.9Z"/>
<path d="M434.3 133.6 L438.2 137.6 L436.5 139.3 L432.5 135.2Z"/>
<path d="M218.3 133.7 L222.8 131.3 L223.6 132.7 L219.1 135.1Z"/>
<path d="M227.6 133.5 L230.3 132.0 L231.3 133.9 L228.6 135.4Z"/>
<path d="M291.7 126.8 L296.2 124.4 L297.4 126.5 L292.9 129.0Z"/>
<path d="M308.9 119.7 L312.3 123.2 L310.9 124.5 L307.6 121.0Z"/>
<path d="M438.1 134.5 L442.5 139.0 L440.7 140.8 L436.3 136.3Z"/>
<path d="M259.8 120.1 L263.4 118.1 L264.2 119.5 L260.5 121.5Z"/>
<path d="M377.8 113.8 L382.2 118.4 L380.7 119.8 L376.3 115.2Z"/>
<path d="M428.7 131.5 L430.8 133.7 L429.5 135.0 L427.4 132.8Z"/>
<path d="M415.0 121.1 L419.8 126.1 L418.3 127.6 L413.5 122.6Z"/>
<path d="M195.9 154.1 L201.2 151.2 L202.1 152.9 L196.8 155.8Z"/>
<path d="M199.0 147.1 L205.0 143.8 L206.3 146.1 L200.3 149.4Z"/>
<path d="M208.8 141.8 L211.8 140.2 L212.6 141.6 L209.6 143.2Z"/>
<path d="M386.2 111.5 L389.8 115.2 L388.3 116.8 L384.6 113.0Z"/>
<path d="M227.4 142.3 L230.5 140.6 L231.7 142.7 L228.6 144.4Z"/>
<path d="M208.1 145.1 L211.5 143.2 L212.4 144.9 L209.1 146.8Z"/>
<path d="M432.0 130.5 L434.9 133.5 L432.9 135.5 L430.0 132.5Z"/>
<path d="M231.4 134.7 L237.0 131.6 L238.2 133.8 L232.6 136.8Z"/>
<path d="M203.9 157.1 L207.3 155.2 L208.2 156.9 L204.8 158.8Z"/>
<path d="M380.0 113.7 L382.9 116.7 L381.8 117.8 L378.9 114.8Z"/>
<path d="M201.1 150.7 L204.6 148.8 L205.7 150.9 L202.3 152.8Z"/>
<path d="M273.1 121.9 L279.1 118.6 L280.2 120.6 L274.2 123.8Z"/>
<path d="M328.7 122.1 L331.3 124.8 L330.1 126.0 L327.5 123.4Z"/>
<path d="M415.4 128.5 L418.2 131.3 L416.9 132.6 L414.2 129.7Z"/>
<path d="M372.0 123.0 L374.6 125.7 L372.5 127.7 L369.9 125.0Z"/>
<path d="M408.3 123.3 L411.6 126.6 L410.4 127.8 L407.1 124.4Z"/>
<path d="M187.7 163.1 L191.2 161.2 L192.4 163.4 L188.9 165.3Z"/>
<path d="M244.0 137.3 L248.7 134.8 L249.6 136.5 L244.9 139.0Z"/>
<path d="M223.7 143.9 L226.6 142.4 L227.5 144.0 L224.6 145.5Z"/>
<path d="M324.2 121.5 L328.0 125.5 L326.6 126.8 L322.8 122.9Z"/>
<path d="M418.1 118.1 L420.3 120.3 L418.9 121.6 L416.8 119.4Z"/>
<path d="M293.8 112.5 L297.0 110.7 L298.0 112.5 L294.7 114.3Z"/>
<path d="M328.2 108.3 L331.3 111.5 L329.3 113.5 L326.2 110.3Z"/>
<path d="M433.8 127.9 L437.8 132.0 L436.1 133.7 L432.1 129.6Z"/>
<path d="M214.5 134.9 L217.2 133.5 L218.5 136.0 L215.8 137.4Z"/>
<path d="M362.1 122.1 L364.2 124.3 L362.4 126.0 L360.3 123.8Z"/>
<path d="M305.0 121.1 L307.9 124.2 L305.8 126.3 L302.8 123.2Z"/>
<path d="M196.3 151.9 L201.5 149.1 L202.9 151.6 L197.6 154.4Z"/>
<path d="M370.5 117.8 L374.8 122.2 L372.8 124.2 L368.5 119.8Z"/>
<path d="M267.9 126.2 L273.7 123.0 L275.0 125.5 L269.3 128.7Z"/>
<path d="M285.1 126.8 L290.7 123.7 L291.9 125.8 L286.2 128.9Z"/>
<path d="M341.5 111.5 L345.2 115.3 L343.5 117.0 L339.8 113.2Z"/>
<path d="M197.1 153.3 L203.2 150.0 L204.6 152.5 L198.5 155.8Z"/>
<path d="M368.1 111.9 L372.3 116.2 L370.6 117.9 L366.4 113.6Z"/>
<path d="M292.4 126.3 L295.4 124.7 L296.6 127.0 L293.7 128.6Z"/>
<path d="M185.1 158.1 L189.5 155.7 L190.3 157.4 L186.0 159.7Z"/>
<path d="M360.7 112.6 L364.5 116.5 L362.4 118.5 L358.6 114.6Z"/>
<path d="M244.1 122.3 L247.8 120.3 L249.0 122.5 L245.3 124.5Z"/>
<path d="M229.2 131.6 L235.0 128.4 L236.2 130.6 L230.4 133.7Z"/>
<path d="M292.4 127.5 L296.2 125.4 L297.4 127.6 L293.6 129.7Z"/>
<path d="M228.2 136.4 L233.7 133.5 L235.0 136.0 L229.6 139.0Z"/>
<path d="M407.7 118.9 L411.4 122.7 L410.0 124.1 L406.3 120.3Z"/>
<path d="M212.0 144.5 L217.5 141.5 L218.9 143.9 L213.3 146.9Z"/>
<path d="M364.1 122.2 L367.0 125.1 L365.7 126.4 L362.9 123.4Z"/>
<path d="M295.0 116.2 L298.4 114.4 L299.4 116.2 L296.0 118.1Z"/>
<path d="M342.2 113.7 L345.2 116.8 L343.2 118.7 L340.2 115.7Z"/>
<path d="M434.7 125.5 L437.0 127.8 L435.9 128.9 L433.6 126.5Z"/>
<path d="M405.7 112.1 L409.8 116.3 L408.1 117.9 L404.1 113.7Z"/>
<path d="M258.6 130.6 L261.3 129.1 L262.1 130.6 L259.4 132.1Z"/>
<path d="M295.0 112.3 L300.6 109.3 L301.5 110.9 L295.9 114.0Z"/>
<path d="M213.7 136.0 L218.5 133.3 L219.6 135.2 L214.7 137.9Z"/>
<path d="M342.7 115.8 L347.0 120.2 L344.9 122.3 L340.6 117.8Z"/>
<path d="M356.9 107.2 L360.3 110.7 L359.0 112.0 L355.6 108.4Z"/>
<path d="M179.8 158.1 L184.9 155.3 L185.8 156.9 L180.7 159.7Z"/>
<path d="M247.7 127.0 L252.8 124.2 L253.9 126.2 L248.8 129.0Z"/>
<path d="M339.1 118.6 L342.3 121.9 L340.4 123.8 L337.2 120.5Z"/>
<path d="M130 480L135 483 M140 490L145 492 M134 497L140 500 M143 502L146 506 M111 514L116 516 M124 519L132 524 M154 520L160 522 M205 520L210 518 M160 548L162 551 M183 555L186 558 M219 555L219 557 M222 570L222 572 M197 573L197 575 M178 600L179 601 M279 520L282 526 M275 534L276 536 M279 550L282 553 M305 547L308 552 M320 592L322 597 M330 601L332 603 M96 410L98 412 M108 440L110 445 M150 440L152 443 M165 410L167 413 M226 497L228 495 M236 480L240 478 M248 466L252 463 M195 455L198 452 M215 470L217 472 M135 562L138 562 M180 575L183 577 M160 590L162 592 M205 585L207 588 M245 590L247 592 M272 595L274 597 M330 170L336 172 M285 166L292 170 M360 165L368 168 M380 170L386 175 M300 269L304 275 M276 296L280 302 M265.6 133.6L268.8 132.6 M332.2 111.3L334.6 113.8 M180.9 187.2L183.6 185.2 M357.5 181.7L362.9 181.4 M253.1 132.3L255.6 128.1 M444.3 139.4L447.7 146.1 M412.8 160.4L416.5 160.4 M422.8 133.8L424.9 136.3 M237.9 180.6L241.5 177.7 M494.0 239.3L490.1 245.6 M393.5 114.6L394.3 122.2 M292.8 124.3L296.0 123.3 M192.6 270.4L197.2 268.6 M272.4 155.9L274.1 154.6 M345.2 109.3L350.4 116.5 M267.7 147.7L274.8 148.0 M242.1 239.7L249.1 236.8 M219.4 144.1L227.4 141.4 M438.3 120.6L441.9 128.2 M268.7 261.0L272.7 259.1 M491.7 246.1L490.6 249.8 M440.8 132.7L442.6 141.3 M500.4 231.3L495.4 239.4 M447.9 145.4L451.3 149.1 M300.1 129.7L300.6 134.8 M438.1 137.8L442.9 143.4 M489.8 241.0L482.6 247.4 M242.2 213.7L245.0 213.4 M493.8 182.1L499.0 190.5 M450.2 135.6L453.9 141.1 M186.0 156.1L189.2 149.1 M246.2 129.4L253.1 124.5 M445.3 154.7L452.2 161.1 M439.0 120.4L439.6 123.8 M245.2 129.3L249.2 127.4 M261.3 163.8L265.6 161.3 M178.7 268.9L182.3 268.1 M346.6 151.9L350.0 152.4 M243.9 121.6L246.5 119.6 M442.8 131.3L446.1 137.0 M387.3 116.9L388.8 121.2 M502.2 200.8L499.4 206.5 M201.5 153.8L206.3 153.0 M354.1 106.4L358.5 107.7 M324.5 108.9L330.3 110.1 M272.9 166.0L277.6 161.5 M451.0 160.0L451.9 164.6 M469.0 263.1L463.3 270.7 M206.7 144.7L212.6 145.2 M227.9 281.6L230.5 280.5 M272.1 121.9L275.1 118.4 M293.1 191.4L297.7 194.4 M337.6 237.7L341.7 239.8 M194.5 153.4L201.3 151.2 M257.5 194.3L264.6 192.6 M496.7 242.1L495.5 245.0 M241.4 234.8L243.2 233.6 M270.7 186.4L276.3 182.6 M445.7 149.2L451.4 155.3 M299.4 234.4L303.0 234.5 M169.8 181.1L176.2 180.8 M267.5 140.4L269.7 140.0 M249.6 172.9L255.8 168.2 M223.3 173.9L227.9 173.5 M271.1 157.4L274.5 156.5 M480.7 228.3L483.6 228.0 M494.3 179.8L498.3 184.2 M214.4 261.3L221.0 260.7 M348.6 167.8L353.5 171.2 M183.0 201.7L186.1 200.4 M389.2 127.7L390.1 132.4 M220.3 152.5L222.9 149.5 M185.1 197.1L192.6 196.5 M501.2 218.3L496.8 221.9 M261.3 143.9L263.6 143.1 M380.0 121.9L386.5 124.9 M187.5 200.1L190.7 200.2 M502.1 198.6L509.5 204.5 M214.4 146.8L219.3 143.1 M287.2 128.1L292.1 122.6 M307.1 108.6L310.0 113.8 M233.4 253.7L236.3 252.5 M319.8 125.0L325.0 127.1 M333.7 114.6L336.9 118.8 M171.8 172.8L177.8 168.5 M214.1 135.6L221.1 136.4 M432.9 126.6L436.9 132.1 M195.9 148.5L198.9 147.7 M488.2 247.8L485.1 256.6 M199.6 143.1L205.3 141.0 M165.6 278.3L167.6 278.0 M186.2 149.5L188.3 145.0 M242.5 150.3L249.0 150.3 M399.5 234.4L404.7 235.8 M485.2 171.6L487.6 173.8 M160.5 270.2L167.2 268.5 M241.2 159.4L244.7 157.7 M497.9 202.7L492.6 207.7 M445.6 137.4L449.2 140.0 M450.0 155.1L450.9 160.0 M222.8 155.6L226.8 154.1 M266.6 134.4L272.9 133.0 M209.5 190.0L212.2 189.2 M234.4 141.5L239.5 136.5 M204.6 152.5L209.1 148.4 M184.9 179.3L191.3 178.6 M289.0 110.7L295.2 106.0 M183.5 186.2L189.2 185.2 M289.1 200.0L293.3 199.7 M206.4 257.2L208.8 256.4 M337.4 184.4L342.1 184.8 M276.2 229.2L281.0 228.7 M168.7 266.3L171.5 265.9 M199.8 149.8L204.9 149.2 M435.4 136.9L436.2 143.5 M369.3 237.8L375.2 238.8 M501.9 232.3L498.2 236.1 M162.5 245.6L164.7 244.9 M304.3 229.8L308.6 229.5 M288.5 220.0L291.6 222.5 M297.7 124.0L301.8 122.7 M153.3 231.5L156.3 229.1 M324.5 115.7L329.4 119.9 M170.0 294.9L174.0 294.5 M473.3 262.3L472.2 265.1 M163.4 267.3L168.8 267.0 M247.4 270.8L254.7 269.3 M273.9 120.7L281.0 117.5 M220.8 251.0L225.5 248.0 M240.5 251.2L242.8 250.3 M232.5 217.6L237.7 217.4 M217.8 139.4L222.9 138.3 M186.5 228.0L191.0 224.8 M491.6 254.4L484.6 261.2 M221.0 139.4L222.5 136.5 M352.9 229.6L356.1 231.1 M310.7 135.3L313.0 137.2 M275.8 280.9L278.1 280.8 M200.6 252.0L204.3 251.2 M186.3 167.5L188.8 164.7 M310.4 123.0L310.9 131.0 M199.8 147.4L203.0 140.9 M221.2 175.4L228.7 175.8 M183.4 160.7L186.8 160.9 M411.7 161.5L416.9 161.1 M271.7 131.5L274.7 124.0 M327.0 107.0L327.5 112.9 M464.5 156.2L470.8 162.4 M191.8 244.1L195.8 243.8 M170.2 275.1L175.0 273.3 M249.5 127.9L252.6 125.7 M201.4 216.3L207.1 212.2 M488.3 180.2L493.4 187.5 M338.8 181.5L341.7 183.2 M479.3 263.7L476.9 266.1 M340.7 117.6L344.9 121.9 M336.9 189.0L340.1 189.4 M383.0 127.6L387.5 135.1 M195.7 161.5L199.5 158.8 M460.9 150.8L463.9 156.4 M415.0 125.4L422.6 129.7 M416.1 134.3L420.1 137.5 M497.5 216.1L493.6 223.7 M353.1 201.5L356.7 203.5 M492.1 236.6L490.1 239.7 M498.1 199.4L502.2 205.5 M210.0 166.3L215.0 165.9 M188.1 279.3L196.0 278.6 M216.3 139.8L222.6 137.7 M379.1 112.3L384.6 117.7 M496.3 190.2L498.4 194.5 M164.0 286.4L170.5 282.9 M496.5 201.1L492.8 204.0 M278.1 140.6L282.8 137.9 M294.4 116.8L298.5 110.0 M404.2 122.2L410.9 126.5 M194.4 190.9L197.3 190.6 M312.3 129.7L314.0 133.9 M456.9 166.9L458.4 170.4 M255.8 116.9L258.9 113.9 M206.8 142.8L210.6 139.1 M236.7 125.8L241.0 125.4 M448.8 159.1L456.2 165.3 M242.8 211.1L247.9 209.8 M260.7 130.8L267.6 129.3 M275.6 162.7L279.9 159.5 M420.4 120.5L423.6 128.7 M352.6 125.3L356.2 129.7 M237.3 131.2L240.3 124.2 M452.8 162.1L458.1 167.3 M209.2 257.8L213.1 257.2 M449.8 150.9L455.3 155.2 M265.5 194.3L272.7 194.1 M255.8 215.9L261.3 213.8 M256.7 171.3L259.0 169.2 M291.9 126.4L296.7 119.6 M347.0 126.0L347.7 130.5 M355.9 126.2L359.9 131.3 M409.9 124.0L411.0 129.2 M192.5 177.1L198.9 177.2 M369.7 118.9L373.1 121.5 M270.4 167.3L274.3 165.8 M212.9 217.8L218.8 214.8 M172.6 199.0L175.7 197.2 M366.2 119.5L368.1 127.6 M271.8 130.8L275.5 125.8 M465.8 229.4L469.1 229.6 M298.4 112.9L303.1 111.3 M483.9 214.6L488.3 214.3 M426.5 121.6L427.8 127.0 M260.3 255.4L263.7 254.0 M430.5 151.5L434.8 152.9 M414.2 116.8L416.7 121.7 M232.0 143.8L238.8 142.9 M245.0 251.3L248.5 249.3 M214.2 273.3L216.0 272.3 M271.3 284.0L279.1 283.7 M276.3 201.3L279.3 199.8 M347.2 239.3L351.2 242.0 M501.2 179.9L504.6 184.6 M333.2 220.1L337.7 220.5 M228.3 131.8L234.4 132.5 M234.6 137.8L240.4 137.5 M239.3 124.1L245.3 119.1 M265.6 151.4L270.2 147.8 M282.9 112.6L287.2 109.8 M500.6 243.5L497.4 250.5 M267.6 117.9L272.8 117.1 M293.8 112.0L299.9 110.4 M190.9 147.3L194.5 140.2 M323.3 114.7L325.4 119.8 M258.5 273.9L262.1 273.7 M438.9 143.3L440.3 150.0 M265.5 157.6L270.9 154.5 M364.5 139.3L369.3 141.1 M255.0 145.4L261.1 140.9 M182.6 257.7L188.0 255.3 M241.5 281.6L243.4 280.2 M400.5 112.2L401.5 116.9 M290.1 110.5L295.5 106.2 M394.4 126.4L395.2 130.1 M198.7 157.2L206.8 157.6 M159.8 221.4L166.6 217.9 M386.3 113.8L390.8 117.3 M351.0 122.8L355.3 129.1 M334.4 123.1L336.1 126.4 M420.3 134.1L422.9 135.8 M237.2 221.4L241.5 217.7 M489.3 184.7L491.4 187.7 M219.9 147.1L226.5 141.1 M220.3 226.5L222.8 226.2 M498.6 235.9L495.9 238.8 M464.1 162.6L465.3 169.2 M271.3 220.6L273.3 220.4 M325.5 107.2L332.9 109.9 M179.9 157.1L185.5 155.9 M446.7 140.1L453.1 147.4 M279.5 147.9L286.7 146.0 M291.2 201.9L296.8 203.7 M334.5 177.8L338.3 180.5 M328.8 175.3L334.1 175.0 M345.6 186.5L350.3 188.6 M393.6 178.6L397.8 180.7 M248.7 135.7L256.1 132.7 M261.2 114.5L265.0 110.7 M215.9 164.6L219.2 162.5 M307.1 125.3L311.6 128.1 M244.9 144.0L251.4 141.3 M262.3 133.8L268.0 133.0 M248.0 175.1L251.5 173.9 M188.4 164.2L196.8 161.6 M202.9 235.6L209.8 233.1 M195.7 242.0L199.2 241.1 M172.4 222.3L175.3 220.6 M198.4 157.9L200.9 152.8 M244.4 213.8L250.9 214.0 M277.0 280.2L279.4 279.2 M430.2 196.4L434.4 199.4 M477.9 243.2L480.8 245.6 M316.3 112.5L317.1 118.6 M222.7 151.7L228.0 152.1 M307.6 117.2L308.7 120.4 M231.0 180.9L236.8 180.4 M243.5 134.1L246.4 127.1 M438.2 119.2L444.3 120.9 M314.2 127.9L316.1 131.7 M303.7 125.6L303.8 131.9 M276.0 122.4L283.9 121.0 M201.7 222.9L203.7 222.6 M182.4 190.8L189.8 189.1 M267.3 255.0L274.1 254.7 M341.1 124.6L342.2 129.3 M488.5 183.9L490.1 191.5 M225.1 160.3L227.7 157.9 M212.0 189.8L218.3 188.6 M258.0 184.2L263.9 181.7 M448.8 148.3L451.0 156.7 M337.9 125.8L344.5 129.9 M251.6 178.6L254.2 176.9 M166.4 234.1L168.2 232.9 M307.1 126.7L311.9 132.1 M307.8 127.2L312.8 128.7 M349.4 118.0L355.9 121.7 M178.2 156.0L183.9 156.5 M413.5 118.6L416.8 122.2 M491.2 249.1L487.1 252.9 M230.4 221.2L232.9 219.1 M199.0 141.5L205.4 140.6 M489.0 182.8L490.2 185.6 M321.2 204.3L326.9 206.0 M313.7 148.4L317.3 148.9 M406.4 131.0L409.6 132.9 M233.1 136.8L238.4 134.7 M490.0 183.9L497.3 189.8 M253.1 160.6L257.7 160.4 M190.3 151.8L196.6 150.0 M393.9 118.4L396.1 124.8 M383.0 139.3L385.6 140.8 M223.2 184.2L226.6 184.1 M426.4 129.0L430.1 131.1 M176.2 218.1L180.2 217.0 M322.9 107.5L324.5 111.1 M231.5 156.0L233.6 156.1 M326.5 140.9L328.6 141.7 M439.1 122.5L441.3 126.0 M253.6 229.4L260.7 227.5 M242.7 134.8L247.5 128.9 M448.2 244.4L451.0 246.0 M369.1 121.5L375.0 123.1 M429.5 124.8L434.6 126.4 M282.9 191.6L286.5 194.3 M256.9 117.4L264.4 116.3 M306.8 120.8L309.4 123.2 M207.5 208.2L210.0 206.5 M192.7 151.6L196.4 152.2 M242.2 249.2L247.1 249.0 M195.1 142.0L198.7 142.5 M240.6 196.0L246.4 191.8 M264.6 137.9L267.4 136.4 M356.7 106.0L358.7 112.4 M266.7 270.3L270.3 268.2 M188.0 148.5L193.5 148.9 M443.1 153.6L445.4 158.8 M273.3 269.4L276.2 269.3 M488.6 249.9L483.8 255.7 M184.4 168.1L187.5 161.0 M356.1 124.8L360.3 131.6 M279.5 175.2L282.2 174.7 M303.8 122.1L308.6 128.5 M227.5 277.1L231.4 275.4 M463.3 174.9L465.3 175.0 M211.7 222.2L216.3 219.1 M246.9 268.3L252.8 263.3 M308.7 120.9L316.1 123.2 M394.0 131.9L398.5 137.0 M258.1 135.7L260.3 133.0 M501.2 199.3L502.4 205.5 M200.7 175.7L206.3 175.1 M393.8 170.7L397.2 171.9 M473.8 260.9L473.0 266.1 M472.9 172.6L477.6 180.8 M248.1 169.1L253.1 165.6 M243.8 247.8L251.5 247.6 M218.0 250.6L220.3 249.5 M503.4 189.2L506.2 193.0 M211.6 139.3L214.4 135.0 M415.6 115.6L419.8 121.3 M245.6 281.1L252.5 280.3 M325.4 157.9L331.1 157.7 M422.8 133.2L424.7 139.4 M430.1 124.2L433.1 126.2 M183.4 200.8L188.4 197.6 M248.9 176.6L256.9 176.7 M319.6 127.2L320.8 130.9 M394.7 114.5L394.6 120.7 M416.8 129.7L419.2 134.4 M321.5 121.0L323.0 129.3 M477.0 224.1L481.0 226.4 M309.0 123.3L309.7 131.1 M232.2 194.8L239.8 195.0 M193.0 159.7L199.1 157.7 M492.2 238.4L488.2 247.1 M165.9 187.6L170.6 185.0 M498.8 183.4L500.1 186.6 M240.6 131.8L242.8 128.5 M312.3 202.6L314.8 203.6 M268.4 121.4L273.7 119.8 M260.0 204.4L262.5 202.8 M258.8 167.6L263.3 166.7 M179.9 238.7L183.1 237.1 M173.6 210.4L176.2 210.4 M254.0 287.0L256.6 286.0 M323.6 128.9L326.4 135.5 M164.4 244.2L167.5 241.8 M167.5 218.3L173.0 215.5 M503.1 189.8L506.0 192.0 M408.2 126.6L413.4 131.3 M276.4 275.4L282.9 271.9 M335.8 152.8L339.1 153.9 M253.4 182.8L258.3 182.3 M223.3 149.8L230.2 149.1 M497.2 206.9L491.1 214.5 M187.4 259.9L191.4 258.5 M246.0 199.5L253.0 199.3 M214.6 134.9L220.5 128.8 M457.5 169.0L459.9 177.9 M284.0 127.4L289.6 127.8 M254.6 143.2L258.0 143.2 M192.4 145.7L196.4 141.9 M458.9 151.7L461.5 156.8 M161.8 260.1L167.5 256.7 M230.7 226.5L236.0 226.1 M282.1 126.4L288.0 124.7 M266.9 168.4L270.9 166.3 M496.7 237.7L492.6 242.8 M280.1 191.9L284.1 194.3 M374.6 127.7L378.9 129.6 M249.2 284.3L257.1 283.9 M313.5 142.6L318.4 143.2 M449.7 152.6L451.9 157.9 M229.3 146.6L234.5 147.3 M202.1 147.4L207.5 147.4 M202.1 139.9L205.9 138.3 M171.7 230.1L176.0 227.0 M414.1 123.8L415.7 131.9 M178.5 153.5L181.3 148.3 M189.4 147.8L191.3 143.2 M187.3 240.6L190.5 240.8 M486.0 180.9L488.2 183.6 M237.0 213.3L240.2 210.6"/>
</g></defs><use href="#art" clip-path="url(#cv)" fill="none" stroke="#000" stroke-width="1" shape-rendering="crispEdges"/></svg>
<!-- DOCK -->
<div style="left:690px;top:51px;width:310px;height:599px;background:#5a5a5a"></div>
<div style="left:690px;top:50px;width:310px;height:2px;background:#3f3f3f"></div>
<div style="left:690px;top:52px;width:2px;height:316px;background:#444"></div>
<div style="left:680px;top:368px;width:39px;height:282px;background:#7c7c7c"></div>
<div style="left:719px;top:368px;width:4px;height:282px;background:#4a4a4a"></div>
<div style="left:690px;top:366px;width:33px;height:2px;background:#4a4a4a"></div>
<div style="left:698px;top:56px;width:1px;height:11px;background:#cfcfcf"></div><div style="left:700px;top:56px;width:1px;height:11px;background:#cfcfcf"></div><div style="left:702px;top:56px;width:1px;height:11px;background:#cfcfcf"></div>
<div style="left:727px;top:56px;width:1px;height:11px;background:#cfcfcf"></div><div style="left:729px;top:56px;width:1px;height:11px;background:#cfcfcf"></div><div style="left:731px;top:56px;width:1px;height:11px;background:#cfcfcf"></div>
<svg style="position:absolute;left:709px;top:57px" width="11" height="8"><path d="M5 0.5L0.5 4L5 7.5ZM10 0.5L5.5 4L10 7.5Z" fill="#d2d2d2"/></svg>
<svg style="position:absolute;left:986px;top:57px" width="11" height="8"><path d="M1 0.5L5.5 4L1 7.5ZM6 0.5L10.5 4L6 7.5Z" fill="#d2d2d2"/></svg>
<div class="grp" style="left:694px;top:69px;height:68px"><div class="grph"></div></div>
<div class="grp" style="left:694px;top:139px;height:40px"><div class="grph"></div></div>
<div class="grp" style="left:694px;top:182px;height:67px"><div class="grph"></div></div>
<div class="grp" style="left:694px;top:252px;height:67px"><div class="grph"></div></div>
<div class="grp" style="left:694px;top:322px;height:41px"><div class="grph"></div></div>
<div class="ib" style="left:697px;top:83px;width:22px;height:22px"></div>
<div class="ib" style="left:697px;top:110px;width:22px;height:22px"></div>
<div class="ib" style="left:697px;top:153px;width:22px;height:22px"></div>
<div class="ib" style="left:697px;top:196px;width:22px;height:22px"></div>
<div class="ib" style="left:697px;top:223px;width:22px;height:22px"></div>
<div class="ib" style="left:697px;top:266px;width:22px;height:22px"></div>
<div class="ib" style="left:697px;top:293px;width:22px;height:22px"></div>
<div class="ib" style="left:697px;top:336px;width:22px;height:22px"></div>
<svg style="position:absolute;left:697px;top:83px" width="22" height="22"><rect x="4.5" y="3.5" width="4" height="3.5" fill="#fff" stroke="#3a3a3a"/><rect x="4.5" y="9.5" width="4" height="4" fill="#fff" stroke="#2a2a2a"/><rect x="4" y="15" width="5" height="5" fill="#505050"/><path d="M12 5H15.5Q19 7.5 17.5 12.5Q16.5 16 13.5 18" stroke="#3c3c3c" stroke-width="2.6" fill="none"/><path d="M11.5 3.5L14 3.5L15 7.5L12 6.5Z" fill="#3c3c3c"/></svg>
<svg style="position:absolute;left:697px;top:110px" width="22" height="22"><defs><linearGradient id="gA" x1="0" y1="0" x2="1" y2="1"><stop offset="0" stop-color="#d6d6d6"/><stop offset="1" stop-color="#f4f4f4"/></linearGradient><linearGradient id="gT" x1="0" y1="0" x2="1" y2="0"><stop offset="0" stop-color="#333"/><stop offset="1" stop-color="#666"/></linearGradient></defs><rect x="2.5" y="5.5" width="16" height="12" fill="url(#gA)" stroke="#222"/><path d="M5.5 7.5L16 11.5L5.5 16Z" fill="url(#gT)"/></svg>
<svg style="position:absolute;left:697px;top:153px" width="22" height="22"><path d="M5.5 6.5L18.5 14.5" stroke="#333" stroke-width="2"/><path d="M1.5 5.5Q2 2 5.5 2.5L4.5 4.8L6.2 6.3L8.3 5Q8.5 8.3 5.2 8.2Z" fill="#333"/><path d="M17 13.5L19.5 15.5" stroke="#222" stroke-width="2.6"/><path d="M18.5 4L10 12.5" stroke="#222" stroke-width="1.3"/><path d="M4 18.5L10.5 12" stroke="#111" stroke-width="3.4" stroke-linecap="round"/><path d="M5 17L7 15" stroke="#888" stroke-width="0.8"/></svg>
<svg style="position:absolute;left:697px;top:196px" width="22" height="22"><path d="M6.5 12.5H15.5V19.5H6.5Z" fill="#1e1e1e"/><rect x="9.5" y="15" width="3" height="3" fill="#e8e8e8"/><path d="M5 5Q3.5 9 8 12.5" stroke="#333" stroke-width="2.4" fill="none"/><path d="M11 3.5V12" stroke="#555" stroke-width="1.6"/><path d="M18.5 8Q14.5 7.5 13.5 12.5" stroke="#333" stroke-width="2.6" fill="none"/></svg>
<svg style="position:absolute;left:697px;top:223px" width="22" height="22"><path d="M3 4.5H5M6 4.5H9M3 7H5M6 7H9M3 9.5H5M6 9.5H9" stroke="#333" stroke-width="1"/><circle cx="13.5" cy="6.5" r="2.8" fill="#555"/><rect x="12.3" y="8.5" width="2.4" height="4" fill="#444"/><rect x="5.5" y="13.5" width="14" height="5" rx="1" fill="#e2e2e2" stroke="#222"/><path d="M10 15H17L13.5 18Z" fill="#222"/></svg>
<svg style="position:absolute;left:697px;top:266px" width="22" height="22"><path d="M3.5 18L9 4.5L14.5 18M5.5 13.5H12.5" stroke="#3a3a3a" stroke-width="1.5" fill="none"/><path d="M16.5 4V19" stroke="#111" stroke-width="1.2"/></svg>
<svg style="position:absolute;left:697px;top:293px" width="22" height="22"><path d="M12 4.5H9A4 4 0 0 0 9 12.5H12Z" fill="#222"/><path d="M11.5 4.5V19.5M15 4.5V19.5M10 4.8H16" stroke="#222" stroke-width="1.5"/></svg>
<svg style="position:absolute;left:697px;top:336px" width="22" height="22"><rect x="3.5" y="3.5" width="15" height="14" fill="#fff" stroke="#111"/><path d="M5 6.5H11M5 9H11M5 11.5H11" stroke="#333" stroke-width="1"/><rect x="12" y="5" width="5" height="7" fill="#666"/><rect x="5" y="13" width="12" height="3" fill="#555"/></svg>
<!-- NAV -->
<div style="left:723px;top:69px;width:274px;height:125px;background:#efefef;border-radius:3px 3px 0 0"></div>
<div style="left:723px;top:69px;width:274px;height:23px;background:linear-gradient(#f3f3f3,#e3e3e3 40%,#cfcfcf);border-radius:3px 3px 0 0"></div>
<svg style="position:absolute;left:972px;top:83px" width="25" height="9"><path d="M0 9L9 1Q10 0 12 0H25V9Z" fill="#efefef"/><path d="M0 9L9 1Q10 0 12 0H25" stroke="#fafafa" fill="none"/></svg>
<svg style="position:absolute;left:979px;top:85px" width="17" height="8"><path d="M2 3.5H7L4.5 6.5Z" fill="#333"/><path d="M8 1.5H16M8 4.5H16M8 7.5H16" stroke="#333" stroke-width="1.2"/></svg>
<svg style="position:absolute;left:972px;top:72px" width="24" height="10"><path d="M2 5.5H9" stroke="#707070" stroke-width="1.8"/><path d="M15 1.5L22 8.5M22 1.5L15 8.5" stroke="#707070" stroke-width="1.2"/></svg>
<div style="left:723px;top:193px;width:274px;height:1px;background:#fafafa"></div>
<div style="left:806px;top:78px;width:78px;height:14px;background:linear-gradient(#ededed,#d0d0d0);border:1px solid #a9a9a9;border-bottom:none;border-radius:5px 5px 0 0"></div>
<span class="t" style="left:813px;top:81px;font-size:11px;letter-spacing:-0.17px;color:#1a1a2a">Гистограмма</span>
<div style="left:885px;top:78px;width:42px;height:14px;background:linear-gradient(#ededed,#d0d0d0);border:1px solid #a9a9a9;border-bottom:none;border-radius:5px 5px 0 0"></div>
<span class="t" style="left:892px;top:81px;font-size:11px;letter-spacing:-0.5px;color:#1a1a2a">Инфо</span>
<div style="left:728px;top:77px;width:77px;height:16px;background:#efefef;border:1px solid #b3b3b3;border-bottom:none;border-radius:5px 5px 0 0"></div>
<div style="left:728px;top:84px;width:3px;height:9px;background:linear-gradient(to right,#a9a9a9,#dadada)"></div>
<span class="t" style="left:735px;top:81px;font-size:11px;letter-spacing:0px;color:#1a1a2a">Навигатор</span>
<svg style="position:absolute;left:792px;top:83px" width="8" height="8"><path d="M1 1L7 7M7 1L1 7" stroke="#555" stroke-width="1.1"/></svg>
<div style="left:826px;top:101px;width:70px;height:71px;background:#8a8a8a"></div>
<div style="left:825px;top:100px;width:70px;height:70px;background:#fff;border:2px solid #e8393c"></div>
<svg style="position:absolute;left:827px;top:102px" width="66" height="66" viewBox="96 103 512 512"><use href="#art" stroke="#666" stroke-width="3" fill="none" opacity="0.75"/></svg>
<div style="left:723px;top:175px;width:258px;height:1px;background:#cdcdcd"></div>
<div style="left:725px;top:176px;width:60px;height:14px;background:#fff;border:1px solid #c9c9c9"></div>
<span class="t" style="left:731px;top:178px;font-size:11px;letter-spacing:-0.6px;color:#111">50 %</span>
<svg style="position:absolute;left:857px;top:183px" width="10" height="6"><path d="M0.5 5.5L5 1L9.5 5.5Z" fill="#fff" stroke="#222" stroke-width="1"/><path d="M0 5.5H10" stroke="#111" stroke-width="1.5"/></svg>
<div style="left:879px;top:184px;width:74px;height:3px;background:#d3d3d3;border-radius:1px"></div>
<div style="left:907px;top:179px;width:9px;height:11px;background:linear-gradient(#fbfbfb,#dedede);border:1px solid #b5b5b5;border-radius:1px"></div>
<svg style="position:absolute;left:961px;top:180px" width="18" height="9"><path d="M0.5 8L5.5 2.5L9 6L12 2L17.5 8Z" fill="#fff" stroke="#222" stroke-width="1.2"/><path d="M0 8.2H18" stroke="#111" stroke-width="1.6"/></svg>
<div style="left:994px;top:180px;width:1px;height:1px;background:#8f8f8f"></div><div style="left:992px;top:182px;width:1px;height:1px;background:#8f8f8f"></div><div style="left:994px;top:182px;width:1px;height:1px;background:#8f8f8f"></div><div style="left:990px;top:184px;width:1px;height:1px;background:#8f8f8f"></div><div style="left:992px;top:184px;width:1px;height:1px;background:#8f8f8f"></div><div style="left:994px;top:184px;width:1px;height:1px;background:#8f8f8f"></div><div style="left:988px;top:186px;width:1px;height:1px;background:#8f8f8f"></div><div style="left:990px;top:186px;width:1px;height:1px;background:#8f8f8f"></div><div style="left:992px;top:186px;width:1px;height:1px;background:#8f8f8f"></div><div style="left:994px;top:186px;width:1px;height:1px;background:#8f8f8f"></div><div style="left:986px;top:188px;width:1px;height:1px;background:#8f8f8f"></div><div style="left:988px;top:188px;width:1px;height:1px;background:#8f8f8f"></div><div style="left:990px;top:188px;width:1px;height:1px;background:#8f8f8f"></div><div style="left:992px;top:188px;width:1px;height:1px;background:#8f8f8f"></div><div style="left:994px;top:188px;width:1px;height:1px;background:#8f8f8f"></div>
<!-- SWATCHES -->
<div style="left:723px;top:198px;width:274px;height:140px;background:#efefef;border-radius:3px 3px 0 0"></div>
<div style="left:723px;top:198px;width:274px;height:23px;background:linear-gradient(#f3f3f3,#e3e3e3 40%,#cfcfcf);border-radius:3px 3px 0 0"></div>
<svg style="position:absolute;left:972px;top:212px" width="25" height="9"><path d="M0 9L9 1Q10 0 12 0H25V9Z" fill="#efefef"/><path d="M0 9L9 1Q10 0 12 0H25" stroke="#fafafa" fill="none"/></svg>
<svg style="position:absolute;left:979px;top:214px" width="17" height="8"><path d="M2 3.5H7L4.5 6.5Z" fill="#333"/><path d="M8 1.5H16M8 4.5H16M8 7.5H16" stroke="#333" stroke-width="1.2"/></svg>
<svg style="position:absolute;left:972px;top:201px" width="24" height="10"><path d="M2 5.5H9" stroke="#707070" stroke-width="1.8"/><path d="M15 1.5L22 8.5M22 1.5L15 8.5" stroke="#707070" stroke-width="1.2"/></svg>
<div style="left:728px;top:207px;width:38px;height:14px;background:linear-gradient(#ededed,#d0d0d0);border:1px solid #a9a9a9;border-bottom:none;border-radius:5px 5px 0 0"></div>
<span class="t" style="left:735px;top:210px;font-size:11px;letter-spacing:-0.2px;color:#1a1a2a">Цвет</span>
<div style="left:837px;top:207px;width:44px;height:14px;background:linear-gradient(#ededed,#d0d0d0);border:1px solid #a9a9a9;border-bottom:none;border-radius:5px 5px 0 0"></div>
<span class="t" style="left:844px;top:210px;font-size:11px;letter-spacing:-0.3px;color:#1a1a2a">Стили</span>
<div style="left:767px;top:206px;width:69px;height:16px;background:#efefef;border:1px solid #b3b3b3;border-bottom:none;border-radius:5px 5px 0 0"></div>
<div style="left:767px;top:213px;width:3px;height:9px;background:linear-gradient(to right,#a9a9a9,#dadada)"></div>
<span class="t" style="left:774px;top:210px;font-size:11px;letter-spacing:-0.2px;color:#1a1a2a">Образцы</span>
<svg style="position:absolute;left:822px;top:212px" width="8" height="8"><path d="M1 1L7 7M7 1L1 7" stroke="#555" stroke-width="1.1"/></svg>
<div style="left:725px;top:225px;width:252px;height:60px;background:#000"></div>
<div style="left:725px;top:285px;width:204px;height:12px;background:#000"></div>
<div style="left:725px;top:225px;width:11px;height:11px;background:#ff0000"></div><div style="left:737px;top:225px;width:11px;height:11px;background:#ffff00"></div><div style="left:749px;top:225px;width:11px;height:11px;background:#00ff00"></div><div style="left:761px;top:225px;width:11px;height:11px;background:#00ffff"></div><div style="left:773px;top:225px;width:11px;height:11px;background:#0000ff"></div><div style="left:785px;top:225px;width:11px;height:11px;background:#ff00ff"></div><div style="left:797px;top:225px;width:11px;height:11px;background:#ffffff"></div><div style="left:809px;top:225px;width:11px;height:11px;background:#ebebeb"></div><div style="left:821px;top:225px;width:11px;height:11px;background:#d6d6d6"></div><div style="left:833px;top:225px;width:11px;height:11px;background:#c2c2c2"></div><div style="left:845px;top:225px;width:11px;height:11px;background:#b7b7b7"></div><div style="left:857px;top:225px;width:11px;height:11px;background:#adadad"></div><div style="left:869px;top:225px;width:11px;height:11px;background:#a3a3a3"></div><div style="left:881px;top:225px;width:11px;height:11px;background:#999999"></div><div style="left:893px;top:225px;width:11px;height:11px;background:#8f8f8f"></div><div style="left:905px;top:225px;width:11px;height:11px;background:#828282"></div><div style="left:917px;top:225px;width:11px;height:11px;background:#ed1c24"></div><div style="left:929px;top:225px;width:11px;height:11px;background:#fff200"></div><div style="left:941px;top:225px;width:11px;height:11px;background:#00a651"></div><div style="left:953px;top:225px;width:11px;height:11px;background:#00aeef"></div><div style="left:965px;top:225px;width:11px;height:11px;background:#2e3192"></div>
<div style="left:725px;top:237px;width:11px;height:11px;background:#ec008c"></div><div style="left:737px;top:237px;width:11px;height:11px;background:#747474"></div><div style="left:749px;top:237px;width:11px;height:11px;background:#686868"></div><div style="left:761px;top:237px;width:11px;height:11px;background:#5c5c5c"></div><div style="left:773px;top:237px;width:11px;height:11px;background:#4f4f4f"></div><div style="left:785px;top:237px;width:11px;height:11px;background:#434343"></div><div style="left:797px;top:237px;width:11px;height:11px;background:#363636"></div><div style="left:809px;top:237px;width:11px;height:11px;background:#262626"></div><div style="left:821px;top:237px;width:11px;height:11px;background:#1a1a1a"></div><div style="left:833px;top:237px;width:11px;height:11px;background:#0d0d0d"></div><div style="left:845px;top:237px;width:11px;height:11px;background:#000000"></div><div style="left:857px;top:237px;width:11px;height:11px;background:#f7977a"></div><div style="left:869px;top:237px;width:11px;height:11px;background:#f9ad81"></div><div style="left:881px;top:237px;width:11px;height:11px;background:#fdc68a"></div><div style="left:893px;top:237px;width:11px;height:11px;background:#fff79a"></div><div style="left:905px;top:237px;width:11px;height:11px;background:#c4df9b"></div><div style="left:917px;top:237px;width:11px;height:11px;background:#a3d39c"></div><div style="left:929px;top:237px;width:11px;height:11px;background:#82ca9d"></div><div style="left:941px;top:237px;width:11px;height:11px;background:#7bcdc8"></div><div style="left:953px;top:237px;width:11px;height:11px;background:#6ecff6"></div><div style="left:965px;top:237px;width:11px;height:11px;background:#7ea7d8"></div>
<div style="left:725px;top:249px;width:11px;height:11px;background:#8493ca"></div><div style="left:737px;top:249px;width:11px;height:11px;background:#8882be"></div><div style="left:749px;top:249px;width:11px;height:11px;background:#a187be"></div><div style="left:761px;top:249px;width:11px;height:11px;background:#bc8cbf"></div><div style="left:773px;top:249px;width:11px;height:11px;background:#f49ac2"></div><div style="left:785px;top:249px;width:11px;height:11px;background:#f6989d"></div><div style="left:797px;top:249px;width:11px;height:11px;background:#f26c4f"></div><div style="left:809px;top:249px;width:11px;height:11px;background:#f68e55"></div><div style="left:821px;top:249px;width:11px;height:11px;background:#fbaf5d"></div><div style="left:833px;top:249px;width:11px;height:11px;background:#fff467"></div><div style="left:845px;top:249px;width:11px;height:11px;background:#acd372"></div><div style="left:857px;top:249px;width:11px;height:11px;background:#7dc473"></div><div style="left:869px;top:249px;width:11px;height:11px;background:#3cb878"></div><div style="left:881px;top:249px;width:11px;height:11px;background:#1cbbb4"></div><div style="left:893px;top:249px;width:11px;height:11px;background:#00bff3"></div><div style="left:905px;top:249px;width:11px;height:11px;background:#448ccb"></div><div style="left:917px;top:249px;width:11px;height:11px;background:#5574b9"></div><div style="left:929px;top:249px;width:11px;height:11px;background:#605ca8"></div><div style="left:941px;top:249px;width:11px;height:11px;background:#855fa8"></div><div style="left:953px;top:249px;width:11px;height:11px;background:#a763a8"></div><div style="left:965px;top:249px;width:11px;height:11px;background:#f06ea9"></div>
<div style="left:725px;top:261px;width:11px;height:11px;background:#f26d7d"></div><div style="left:737px;top:261px;width:11px;height:11px;background:#ed1c24"></div><div style="left:749px;top:261px;width:11px;height:11px;background:#f26522"></div><div style="left:761px;top:261px;width:11px;height:11px;background:#f7941d"></div><div style="left:773px;top:261px;width:11px;height:11px;background:#fff200"></div><div style="left:785px;top:261px;width:11px;height:11px;background:#8dc63f"></div><div style="left:797px;top:261px;width:11px;height:11px;background:#39b54a"></div><div style="left:809px;top:261px;width:11px;height:11px;background:#00a651"></div><div style="left:821px;top:261px;width:11px;height:11px;background:#00a99d"></div><div style="left:833px;top:261px;width:11px;height:11px;background:#00aeef"></div><div style="left:845px;top:261px;width:11px;height:11px;background:#0072bc"></div><div style="left:857px;top:261px;width:11px;height:11px;background:#0054a6"></div><div style="left:869px;top:261px;width:11px;height:11px;background:#2e3192"></div><div style="left:881px;top:261px;width:11px;height:11px;background:#662d91"></div><div style="left:893px;top:261px;width:11px;height:11px;background:#92278f"></div><div style="left:905px;top:261px;width:11px;height:11px;background:#ec008c"></div><div style="left:917px;top:261px;width:11px;height:11px;background:#ed145b"></div><div style="left:929px;top:261px;width:11px;height:11px;background:#9e0b0f"></div><div style="left:941px;top:261px;width:11px;height:11px;background:#a0410d"></div><div style="left:953px;top:261px;width:11px;height:11px;background:#a36209"></div><div style="left:965px;top:261px;width:11px;height:11px;background:#aba000"></div>
<div style="left:725px;top:273px;width:11px;height:11px;background:#598527"></div><div style="left:737px;top:273px;width:11px;height:11px;background:#1a7b30"></div><div style="left:749px;top:273px;width:11px;height:11px;background:#007236"></div><div style="left:761px;top:273px;width:11px;height:11px;background:#00746b"></div><div style="left:773px;top:273px;width:11px;height:11px;background:#0076a3"></div><div style="left:785px;top:273px;width:11px;height:11px;background:#004b80"></div><div style="left:797px;top:273px;width:11px;height:11px;background:#003471"></div><div style="left:809px;top:273px;width:11px;height:11px;background:#1b1464"></div><div style="left:821px;top:273px;width:11px;height:11px;background:#440e62"></div><div style="left:833px;top:273px;width:11px;height:11px;background:#630460"></div><div style="left:845px;top:273px;width:11px;height:11px;background:#9e005d"></div><div style="left:857px;top:273px;width:11px;height:11px;background:#9e0039"></div><div style="left:869px;top:273px;width:11px;height:11px;background:#790000"></div><div style="left:881px;top:273px;width:11px;height:11px;background:#7b2e00"></div><div style="left:893px;top:273px;width:11px;height:11px;background:#7d4900"></div><div style="left:905px;top:273px;width:11px;height:11px;background:#827b00"></div><div style="left:917px;top:273px;width:11px;height:11px;background:#406618"></div><div style="left:929px;top:273px;width:11px;height:11px;background:#005e20"></div><div style="left:941px;top:273px;width:11px;height:11px;background:#005826"></div><div style="left:953px;top:273px;width:11px;height:11px;background:#005952"></div><div style="left:965px;top:273px;width:11px;height:11px;background:#005b7f"></div>
<div style="left:725px;top:285px;width:11px;height:11px;background:#003663"></div><div style="left:737px;top:285px;width:11px;height:11px;background:#002157"></div><div style="left:749px;top:285px;width:11px;height:11px;background:#0d004c"></div><div style="left:761px;top:285px;width:11px;height:11px;background:#32004b"></div><div style="left:773px;top:285px;width:11px;height:11px;background:#4b0049"></div><div style="left:785px;top:285px;width:11px;height:11px;background:#7b0046"></div><div style="left:797px;top:285px;width:11px;height:11px;background:#7a0026"></div><div style="left:809px;top:285px;width:11px;height:11px;background:#c7b299"></div><div style="left:821px;top:285px;width:11px;height:11px;background:#998675"></div><div style="left:833px;top:285px;width:11px;height:11px;background:#736357"></div><div style="left:845px;top:285px;width:11px;height:11px;background:#534741"></div><div style="left:857px;top:285px;width:11px;height:11px;background:#37302a"></div><div style="left:869px;top:285px;width:11px;height:11px;background:#c69c6d"></div><div style="left:881px;top:285px;width:11px;height:11px;background:#a67c52"></div><div style="left:893px;top:285px;width:11px;height:11px;background:#8c6239"></div><div style="left:905px;top:285px;width:11px;height:11px;background:#754c24"></div><div style="left:917px;top:285px;width:11px;height:11px;background:#603913"></div>
<div style="left:982px;top:224px;width:14px;height:96px;background:#f4f4f4;border-left:1px solid #e2e2e2"></div>
<div style="left:982px;top:225px;width:14px;height:14px;background:#e6e6e6"></div>
<svg style="position:absolute;left:985px;top:229px" width="8" height="6"><path d="M1 4.5L4 1.5L7 4.5" stroke="#333" stroke-width="1.6" fill="none"/></svg>
<div style="left:982px;top:305px;width:14px;height:14px;background:#e6e6e6"></div>
<svg style="position:absolute;left:985px;top:309px" width="8" height="6"><path d="M1 1.5L4 4.5L7 1.5" stroke="#333" stroke-width="1.6" fill="none"/></svg>
<div style="left:723px;top:320px;width:274px;height:1px;background:#d2d2d2"></div>
<svg style="position:absolute;left:934px;top:322px" width="12" height="12"><rect x="1.5" y="1.5" width="9" height="9" fill="#fff" stroke="#222"/><rect x="5" y="5" width="5" height="5" fill="#333"/></svg>
<svg style="position:absolute;left:962px;top:321px" width="12" height="13"><path d="M1 3H11M4 3V1.5H8V3" stroke="#444" fill="none"/><path d="M2.5 4H9.5L9 12H3Z" fill="#ddd" stroke="#444"/><path d="M5 5.5V10.5M7 5.5V10.5" stroke="#777"/></svg>
<div style="left:994px;top:326px;width:1px;height:1px;background:#8f8f8f"></div><div style="left:992px;top:328px;width:1px;height:1px;background:#8f8f8f"></div><div style="left:994px;top:328px;width:1px;height:1px;background:#8f8f8f"></div><div style="left:990px;top:330px;width:1px;height:1px;background:#8f8f8f"></div><div style="left:992px;top:330px;width:1px;height:1px;background:#8f8f8f"></div><div style="left:994px;top:330px;width:1px;height:1px;background:#8f8f8f"></div><div style="left:988px;top:332px;width:1px;height:1px;background:#8f8f8f"></div><div style="left:990px;top:332px;width:1px;height:1px;background:#8f8f8f"></div><div style="left:992px;top:332px;width:1px;height:1px;background:#8f8f8f"></div><div style="left:994px;top:332px;width:1px;height:1px;background:#8f8f8f"></div><div style="left:986px;top:334px;width:1px;height:1px;background:#8f8f8f"></div><div style="left:988px;top:334px;width:1px;height:1px;background:#8f8f8f"></div><div style="left:990px;top:334px;width:1px;height:1px;background:#8f8f8f"></div><div style="left:992px;top:334px;width:1px;height:1px;background:#8f8f8f"></div><div style="left:994px;top:334px;width:1px;height:1px;background:#8f8f8f"></div>
<div style="left:723px;top:337px;width:274px;height:1px;background:#fafafa"></div>
<!-- LAYERS -->
<div style="left:723px;top:343px;width:274px;height:306px;background:#efefef;border-radius:3px 3px 0 0"></div>
<div style="left:723px;top:343px;width:274px;height:23px;background:linear-gradient(#f3f3f3,#e3e3e3 40%,#cfcfcf);border-radius:3px 3px 0 0"></div>
<svg style="position:absolute;left:972px;top:357px" width="25" height="9"><path d="M0 9L9 1Q10 0 12 0H25V9Z" fill="#efefef"/><path d="M0 9L9 1Q10 0 12 0H25" stroke="#fafafa" fill="none"/></svg>
<svg style="position:absolute;left:979px;top:359px" width="17" height="8"><path d="M2 3.5H7L4.5 6.5Z" fill="#333"/><path d="M8 1.5H16M8 4.5H16M8 7.5H16" stroke="#333" stroke-width="1.2"/></svg>
<svg style="position:absolute;left:972px;top:346px" width="24" height="10"><path d="M2 5.5H9" stroke="#707070" stroke-width="1.8"/><path d="M15 1.5L22 8.5M22 1.5L15 8.5" stroke="#707070" stroke-width="1.2"/></svg>
<div style="left:723px;top:649px;width:275px;height:1px;background:#9c9c9c"></div>
<div style="left:777px;top:352px;width:53px;height:14px;background:linear-gradient(#ededed,#d0d0d0);border:1px solid #a9a9a9;border-bottom:none;border-radius:5px 5px 0 0"></div>
<span class="t" style="left:784px;top:355px;font-size:11px;letter-spacing:-0.2px;color:#1a1a2a">Каналы</span>
<div style="left:831px;top:352px;width:57px;height:14px;background:linear-gradient(#ededed,#d0d0d0);border:1px solid #a9a9a9;border-bottom:none;border-radius:5px 5px 0 0"></div>
<span class="t" style="left:838px;top:355px;font-size:11px;letter-spacing:0px;color:#1a1a2a">Контуры</span>
<div style="left:728px;top:351px;width:48px;height:16px;background:#efefef;border:1px solid #b3b3b3;border-bottom:none;border-radius:5px 5px 0 0"></div>
<div style="left:728px;top:358px;width:3px;height:9px;background:linear-gradient(to right,#a9a9a9,#dadada)"></div>
<span class="t" style="left:735px;top:355px;font-size:11px;letter-spacing:0px;color:#1a1a2a">Слои</span>
<svg style="position:absolute;left:765px;top:357px" width="8" height="8"><path d="M1 1L7 7M7 1L1 7" stroke="#555" stroke-width="1.1"/></svg>
<div style="left:727px;top:371px;width:162px;height:19px;background:#fff;border:1px solid #c2c2c2"></div>
<div style="left:874px;top:372px;width:14px;height:17px;background:linear-gradient(#f2f2f2,#d9d9d9);border-left:1px solid #d0d0d0"></div>
<svg style="position:absolute;left:877px;top:378px" width="8" height="6"><path d="M1 1.5L4 4.5L7 1.5" stroke="#444" stroke-width="1.6" fill="none"/></svg>
<span class="t" style="left:731px;top:375px;font-size:11px;color:#111;letter-spacing:-0.6px">Нормальный</span>
<span class="t" style="left:892px;top:375px;font-size:11px;color:#111;letter-spacing:-0.3px">Непрозр.:</span>
<div style="left:942px;top:371px;width:52px;height:18px;background:#fff;border:1px solid #c6c6c6"></div>
<div style="left:977px;top:372px;width:16px;height:16px;background:#ececec"></div>
<svg style="position:absolute;left:982px;top:376px" width="6" height="8"><path d="M1.5 1L4.5 4L1.5 7" stroke="#333" stroke-width="1.5" fill="none"/></svg>
<span class="t" style="left:948px;top:375px;font-size:11px;color:#111;letter-spacing:-0.9px">100%</span>
<div style="left:723px;top:392px;width:274px;height:1px;background:#d4d4d4"></div>
<div style="left:723px;top:393px;width:274px;height:1px;background:#fafafa"></div>
<span class="t" style="left:731px;top:401px;font-size:11px;color:#111;letter-spacing:-0.23px">Закрепить:</span>
<svg style="position:absolute;left:790px;top:400px" width="12" height="12"><rect x="0.5" y="0.5" width="11" height="11" fill="#fff" stroke="#444"/><rect x="2" y="2" width="4" height="4" fill="#bbb"/><rect x="6" y="6" width="4" height="4" fill="#bbb"/></svg>
<svg style="position:absolute;left:806px;top:399px" width="15" height="14"><path d="M14 0.5L6 9" stroke="#333" stroke-width="1.3"/><path d="M7 8Q3 8 2 12L1 13.5Q5 13 8 10Z" fill="#777" stroke="#333" stroke-width="0.8"/></svg>
<svg style="position:absolute;left:824px;top:399px" width="13" height="13"><path d="M6.5 1V12M1 6.5H12" stroke="#111" stroke-width="1.3"/><path d="M6.5 0L4 3H9ZM6.5 13L4 10H9ZM0 6.5L3 4V9ZM13 6.5L10 4V9Z" fill="#111"/></svg>
<svg style="position:absolute;left:843px;top:400px" width="10" height="12"><path d="M2.5 5V3.5A2.5 2.5 0 0 1 7.5 3.5V5" stroke="#222" stroke-width="1.6" fill="none"/><rect x="0.5" y="5" width="9" height="6.5" fill="#222"/><rect x="3" y="7" width="4" height="2" fill="#666"/></svg>
<span class="t" style="left:898px;top:401px;font-size:11px;color:#111;letter-spacing:-0.5px">Заливка:</span>
<div style="left:942px;top:397px;width:52px;height:18px;background:#fff;border:1px solid #c6c6c6"></div>
<div style="left:977px;top:398px;width:16px;height:16px;background:#ececec"></div>
<svg style="position:absolute;left:982px;top:402px" width="6" height="8"><path d="M1.5 1L4.5 4L1.5 7" stroke="#333" stroke-width="1.5" fill="none"/></svg>
<span class="t" style="left:948px;top:401px;font-size:11px;color:#111;letter-spacing:-0.9px">100%</span>
<div style="left:723px;top:418px;width:259px;height:1px;background:#cdcdcd"></div>
<div style="left:747px;top:419px;width:1px;height:212px;background:#d6d6d6"></div>
<div style="left:982px;top:418px;width:14px;height:213px;background:#f3f3f3;border-left:1px solid #e0e0e0"></div>
<div style="left:982px;top:419px;width:14px;height:14px;background:#e6e6e6"></div>
<svg style="position:absolute;left:985px;top:423px" width="8" height="6"><path d="M1 4.5L4 1.5L7 4.5" stroke="#333" stroke-width="1.6" fill="none"/></svg>
<div style="left:982px;top:617px;width:14px;height:14px;background:#e6e6e6"></div>
<svg style="position:absolute;left:985px;top:621px" width="8" height="6"><path d="M1 1.5L4 4.5L7 1.5" stroke="#333" stroke-width="1.6" fill="none"/></svg>
<div style="left:728px;top:442px;width:16px;height:15px;background:#e4e4e4;border:1px solid #ececec"></div><svg style="position:absolute;left:728px;top:442px" width="16" height="15"><path d="M2 8Q8 3 14.5 8Q8 13 2 8Z" fill="#fff" stroke="#222" stroke-width="1"/><circle cx="7.8" cy="7.8" r="2.7" fill="#111"/><circle cx="6.8" cy="6.9" r="0.8" fill="#fff"/><path d="M2 7Q8 1.5 14.5 7" stroke="#111" stroke-width="1.5" fill="none"/><path d="M3.5 10.5Q8 13.5 13 10.5" stroke="#555" stroke-width="0.8" fill="none"/></svg>
<div style="left:751px;top:422px;width:57px;height:56px;background:#fff;border:1px solid #111"></div>
<svg style="position:absolute;left:752px;top:423px" width="55" height="55" viewBox="96 103 512 512"><use href="#art" stroke="#777" stroke-width="3" fill="none" opacity="0.6"/></svg>
<span class="t" style="left:815px;top:446px;font-size:11px;color:#111;letter-spacing:-0.25px">Задний план (копия)</span>
<div style="left:723px;top:479px;width:259px;height:1px;background:#d0d0d0"></div>
<div style="left:748px;top:482px;width:233px;height:62px;background:#1b2024"></div>
<div style="left:725px;top:479px;width:253px;height:68px;border:3px solid #45a551;border-radius:3px"></div>
<div style="left:728px;top:506px;width:16px;height:15px;background:#e4e4e4;border:1px solid #ececec"></div><svg style="position:absolute;left:728px;top:506px" width="16" height="15"><path d="M2 8Q8 3 14.5 8Q8 13 2 8Z" fill="#fff" stroke="#222" stroke-width="1"/><circle cx="7.8" cy="7.8" r="2.7" fill="#111"/><circle cx="6.8" cy="6.9" r="0.8" fill="#fff"/><path d="M2 7Q8 1.5 14.5 7" stroke="#111" stroke-width="1.5" fill="none"/><path d="M3.5 10.5Q8 13.5 13 10.5" stroke="#555" stroke-width="0.8" fill="none"/></svg>
<div style="left:749px;top:483px;width:60px;height:60px;background:#fff;border:2px solid #111"></div>
<div style="left:752px;top:486px;width:54px;height:54px;background:#fff;border:1px solid #111"></div>
<span class="t" style="left:815px;top:508px;font-size:11px;font-weight:bold;color:#f4f4f4;letter-spacing:-0.3px">Слой 1</span>
<div style="left:725px;top:562px;width:23px;height:27px;border:3px solid #47a656;border-radius:2px;background:#e9e9e9"></div>
<div style="left:751px;top:548px;width:57px;height:57px;background:#fff;border:1px solid #111"></div>
<svg style="position:absolute;left:752px;top:549px" width="55" height="55" viewBox="752 549 55 55"><defs><linearGradient id="gSk" x1="0" y1="0" x2="1" y2="0.3"><stop offset="0" stop-color="#7d5d4c"/><stop offset="0.6" stop-color="#c29c84"/><stop offset="1" stop-color="#d8b8a0"/></linearGradient></defs><path d="M782.0 565.8 L789.5 568.0 L790.8 572.3 L788.7 576.6 L787.4 578.8 L788.1 583.1 L785.4 585.2 L784.1 587.4 L783.1 589.5 L780.9 591.7 L778.8 593.0 L776.6 590.6 L774.4 587.4 L772.3 583.1 L769.1 579.8 L766.4 577.1 L770.1 575.5 L772.3 572.3 L775.5 568.2 L779.3 566.7Z" fill="url(#gSk)"/><path d="M766.4 577.1 L772.3 572.3 L775.5 576.6 L776.6 585.2 L778.8 592.7 L774.4 587.4 L772.3 583.1 L769.1 579.8Z" fill="#6e5244" opacity="0.8"/><path d="M751.3 588.4 L755.1 575.5 L759.9 576.6 L765.8 580.0 L772.3 585.2 L776.6 589.5 L781.4 593.8 L777.1 600.3 L775.7 604.6 L750.8 604.6Z" fill="#141a26"/><path d="M756.1 580.9 L761.5 578.8 L766.9 583.1 L764.8 587.4 L758.3 588.4Z" fill="#2c3a55" opacity="0.8"/><path d="M758.3 563.7 L759.9 556.1 L762.6 552.9 L766.9 550.8 L772.3 549.7 L778.8 549.5 L785.2 550.8 L790.6 554.0 L794.9 558.3 L796.5 561.5 L793.8 564.8 L790.6 566.9 L786.3 565.8 L783.1 566.9 L780.9 566.4 L777.7 566.9 L774.4 569.1 L772.3 572.3 L771.2 576.6 L768.0 576.6 L763.7 574.4 L760.5 571.2 L758.8 568.0Z" fill="#23252f"/><path d="M759.9 556.1 L757.2 554.5 L763.1 553.5 L764.8 548.6 L769.1 550.8 L773.4 547.5 L775.5 549.9 L782.0 548.1 L785.2 550.8 L791.7 550.2 L790.6 554.0 L797.1 556.1 L794.9 558.3Z" fill="#2b2d38"/><path d="M765.8 577.7 L772.3 572.3 L776.6 590 L781.4 593.8 L772.3 585.2 L765.8 580.0Z" fill="#6a4c3e"/><path d="M770 556 L778 553 L786 556 L782 560 L774 561Z" fill="#3f4250" opacity="0.7"/><path d="M772 572 L774.4 569.1 L777.7 566.9 L776 571Z" fill="#5a5560"/><path d="M765.3 569.1 L769.1 568.2 L772.3 571.2 L772.3 576.6 L769.1 577.7 L766.4 575.5Z" fill="#a88270"/><path d="M767 570.5 L769.5 571 L770 575 L768 575.5Z" fill="#4a3128"/></svg>
<span class="t" style="left:815px;top:572px;font-size:11px;font-style:italic;color:#111;letter-spacing:-0.4px">Задний план</span>
<svg style="position:absolute;left:955px;top:571px" width="10" height="12"><path d="M2.5 5V3.5A2.5 2.5 0 0 1 7.5 3.5V5" stroke="#333" stroke-width="1.4" fill="none"/><rect x="1" y="5" width="8" height="6.5" fill="#fff" stroke="#333"/><rect x="3" y="7.5" width="4" height="2" fill="#777"/></svg>
<div style="left:723px;top:608px;width:259px;height:1px;background:#d0d0d0"></div>
<div style="left:723px;top:631px;width:274px;height:1px;background:#cfcfcf"></div>
<svg style="position:absolute;left:795px;top:633px" width="20" height="10"><rect x="1" y="2" width="9" height="6" rx="3" fill="none" stroke="#777" stroke-width="1.8"/><rect x="9" y="2" width="9" height="6" rx="3" fill="none" stroke="#777" stroke-width="1.8"/></svg>
<span class="t" style="left:826px;top:632px;font-size:12.5px;font-style:italic;font-weight:bold;font-family:'Liberation Serif',serif;color:#333">fx</span>
<svg style="position:absolute;left:842px;top:641px" width="4" height="3"><path d="M0 0H4L2 3Z" fill="#222"/></svg>
<svg style="position:absolute;left:853px;top:633px" width="15" height="12"><rect x="0.5" y="0.5" width="14" height="11" fill="#888" stroke="#333"/><circle cx="7.5" cy="6" r="3.8" fill="#fff"/></svg>
<svg style="position:absolute;left:880px;top:632px" width="18" height="13"><circle cx="6.5" cy="6.5" r="5.5" fill="#fff" stroke="#444" stroke-width="1.2"/><path d="M11 2.5A5.5 5.5 0 0 1 2.5 10.5Z" fill="#444"/><path d="M14 10H18L16 13Z" fill="#222"/></svg>
<svg style="position:absolute;left:907px;top:634px" width="13" height="11"><path d="M0.5 1.5H5L6 2.5H12.5V10.5H0.5Z" fill="url(#gF)" stroke="#555"/><defs><linearGradient id="gF" x1="0" y1="0" x2="0" y2="1"><stop offset="0" stop-color="#fafafa"/><stop offset="1" stop-color="#cfcfcf"/></linearGradient></defs></svg>
<svg style="position:absolute;left:935px;top:633px" width="12" height="12"><rect x="1.5" y="1.5" width="9" height="9" fill="#fff" stroke="#333"/><rect x="5" y="5" width="5" height="5" fill="#444"/></svg>
<svg style="position:absolute;left:962px;top:632px" width="12" height="13"><path d="M1 3H11M4 3V1.5H8V3" stroke="#444" fill="none"/><path d="M2.5 4H9.5L9 12H3Z" fill="#ddd" stroke="#444"/><path d="M5 5.5V10.5M7 5.5V10.5" stroke="#777"/></svg>
<div style="left:994px;top:636px;width:1px;height:1px;background:#8f8f8f"></div><div style="left:992px;top:638px;width:1px;height:1px;background:#8f8f8f"></div><div style="left:994px;top:638px;width:1px;height:1px;background:#8f8f8f"></div><div style="left:990px;top:640px;width:1px;height:1px;background:#8f8f8f"></div><div style="left:992px;top:640px;width:1px;height:1px;background:#8f8f8f"></div><div style="left:994px;top:640px;width:1px;height:1px;background:#8f8f8f"></div><div style="left:988px;top:642px;width:1px;height:1px;background:#8f8f8f"></div><div style="left:990px;top:642px;width:1px;height:1px;background:#8f8f8f"></div><div style="left:992px;top:642px;width:1px;height:1px;background:#8f8f8f"></div><div style="left:994px;top:642px;width:1px;height:1px;background:#8f8f8f"></div><div style="left:986px;top:644px;width:1px;height:1px;background:#8f8f8f"></div><div style="left:988px;top:644px;width:1px;height:1px;background:#8f8f8f"></div><div style="left:990px;top:644px;width:1px;height:1px;background:#8f8f8f"></div><div style="left:992px;top:644px;width:1px;height:1px;background:#8f8f8f"></div><div style="left:994px;top:644px;width:1px;height:1px;background:#8f8f8f"></div>
</body></html>
